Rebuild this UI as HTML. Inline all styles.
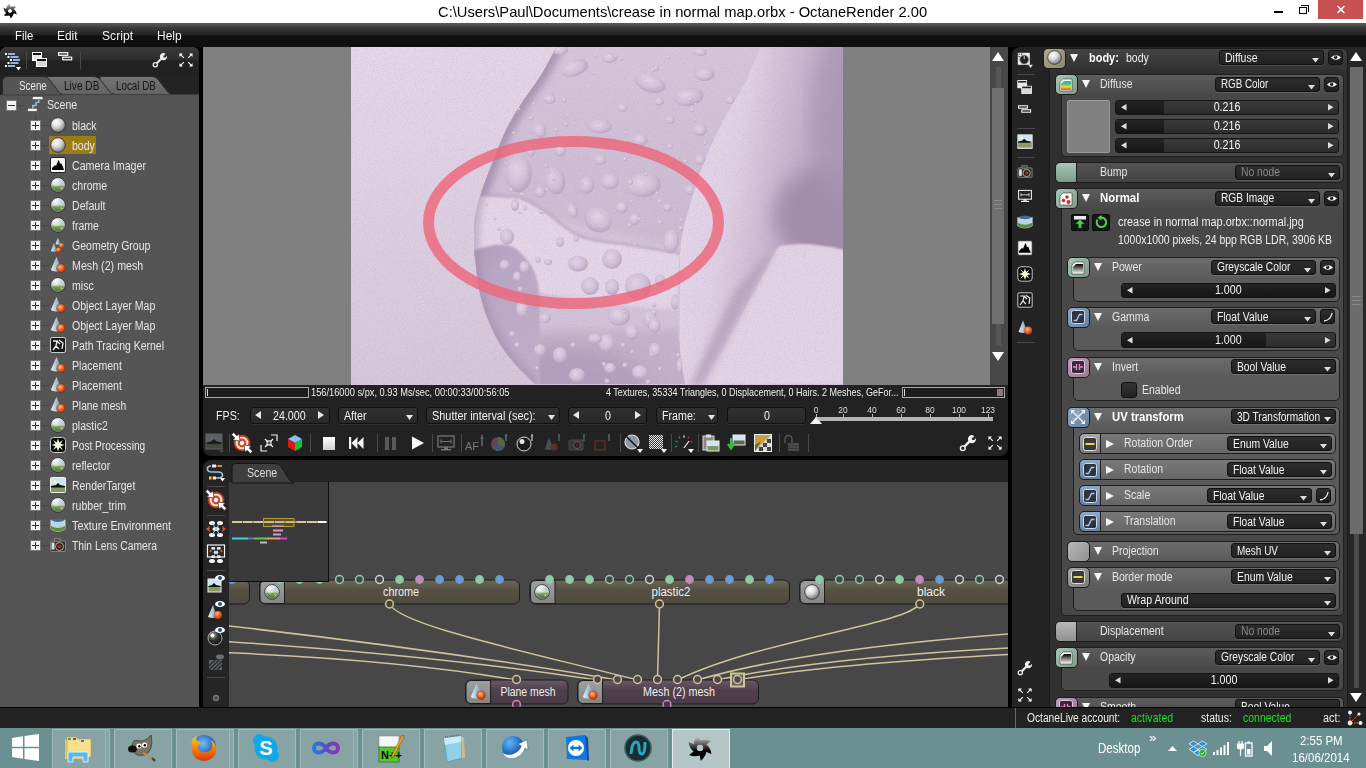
<!DOCTYPE html><html><head><meta charset="utf-8"><title>OctaneRender</title><style>
*{box-sizing:border-box;margin:0;padding:0}
html,body{width:1366px;height:768px;overflow:hidden;background:#000}
body{position:relative;font-family:"Liberation Sans",sans-serif;font-size:12px;color:#e6e6e6}
.a{position:absolute}
.t{position:absolute;white-space:nowrap;transform-origin:0 50%;transform:scaleX(.89);line-height:14px}
.tc{position:absolute;white-space:nowrap;text-align:center;transform:scaleX(.89);line-height:14px}
svg{position:absolute;overflow:visible}
</style></head><body>
<div class="a" style="left:0px;top:0px;width:1366px;height:23px;background:#fff"></div>
<svg style="left:0;top:0" width="24" height="22" viewBox="0 0 24 22"><defs><linearGradient id="olg1" gradientUnits="userSpaceOnUse" x1="0" y1="3.4000000000000004" x2="0" y2="18.6"><stop offset="0" stop-color="#c8c8c8"/><stop offset=".5" stop-color="#2a2a2a"/><stop offset=".62" stop-color="#000"/><stop offset="1" stop-color="#000"/></linearGradient></defs><path d="M5.99 10.65 Q5.93 6.48 9.60 3.41 Q10.14 7.05 10.36 8.43 Z M8.30 7.35 Q11.88 5.22 16.37 6.86 Q13.49 9.14 12.41 10.03 Z M12.31 7.70 Q15.95 9.74 16.77 14.45 Q13.35 13.09 12.05 12.60 Z M14.01 11.35 Q14.07 15.52 10.40 18.59 Q9.86 14.95 9.64 13.57 Z M11.70 14.65 Q8.12 16.78 3.63 15.14 Q6.51 12.86 7.59 11.97 Z M7.69 14.30 Q4.05 12.26 3.23 7.55 Q6.65 8.91 7.95 9.40 Z " fill="url(#olg1)"/><circle cx="10" cy="11" r="2.99" fill="none" stroke="url(#olg1)" stroke-width="1.95"/></svg>
<div class="t" style="left:438px;top:4px;font-size:15px;color:#000;transform:scaleX(.981);line-height:16px">C:\Users\Paul\Documents\crease in normal map.orbx - OctaneRender 2.00</div>
<div class="a" style="left:1274px;top:11px;width:9px;height:2px;background:#000"></div>
<div class="a" style="left:1299px;top:7px;width:8px;height:7px;border:1px solid #000;border-top-width:1px"></div>
<div class="a" style="left:1301px;top:5px;width:8px;height:7px;border:1px solid #000;border-left:none;border-bottom:none"></div>
<div class="a" style="left:1301px;top:5px;width:8px;height:1px;background:#000"></div>
<div class="a" style="left:1318px;top:0px;width:45px;height:19px;background:#c75050"></div>
<svg style="left:1337px;top:6px" width="8" height="7" viewBox="0 0 8 7"><path d="M.6 0 L7.400 7 M7.400 0 L.6 7" stroke="#fff" stroke-width="1.500"/></svg>
<div class="a" style="left:0px;top:22.5px;width:1366px;height:24.5px;background:linear-gradient(#5c5c5c 0%,#3a3a3a 20%,#202020 50%,#0f0f0f 54%,#0f0f0f 100%)"></div>
<div class="t" style="left:14.5px;top:28px;font-size:13.5px;transform:scaleX(0.8412);color:#f2f2f2;line-height:15px">File</div>
<div class="t" style="left:57.4px;top:28px;font-size:13.5px;transform:scaleX(0.8855);color:#f2f2f2;line-height:15px">Edit</div>
<div class="t" style="left:102px;top:28px;font-size:13.5px;transform:scaleX(0.8983);color:#f2f2f2;line-height:15px">Script</div>
<div class="t" style="left:157.2px;top:28px;font-size:13.5px;transform:scaleX(0.8860);color:#f2f2f2;line-height:15px">Help</div>
<div class="a" style="left:0px;top:707.5px;width:1366px;height:21px;background:#222"></div>
<div class="a" style="left:0px;top:47px;width:199px;height:660px;background:#555;border-radius:7px 7px 0 0"></div>
<div class="a" style="left:0px;top:47px;width:199px;height:28px;background:linear-gradient(#3a3a3a 0%,#2c2c2c 45%,#222 50%,#202020 100%);border-radius:7px 7px 0 0"></div>
<div class="a" style="left:0px;top:75px;width:199px;height:20px;background:#232323"></div>
<svg style="left:0;top:75px" width="200" height="20" viewBox="0 0 200 20"><defs><linearGradient id="tg" x1="0" y1="0" x2="0" y2="1"><stop offset="0" stop-color="#747474"/><stop offset="1" stop-color="#626262"/></linearGradient></defs><path d="M100 19.500 L100 1.500 L152 1.500 Q156 1.500 158.500 5 L167 16 Q169 19 172 19.500 Z" fill="url(#tg)" stroke="#2a2a2a" stroke-width="1"/><path d="M40 19.500 L40 1.500 L94 1.500 Q98 1.500 100.500 5 L109 16 Q111 19 115 19.500 Z" fill="url(#tg)" stroke="#2a2a2a" stroke-width="1"/><path d="M2.500 20 L2.500 7 Q2.500 1.500 8 1.500 L44 1.500 Q47.500 1.500 50 5 L58 16 Q60 19 63 19.500 L63 20 Z" fill="#555" stroke="#2a2a2a" stroke-width="1"/><rect x="1" y="19.500" width="198" height="1" fill="#555"/></svg>
<div class="t" style="left:19px;top:79px;font-size:12px;transform:scaleX(0.8170);color:#e4e4e4">Scene</div>
<div class="t" style="left:63.5px;top:79px;font-size:12px;transform:scaleX(0.8425);color:#161616">Live DB</div>
<div class="t" style="left:115.5px;top:79px;font-size:12px;transform:scaleX(0.8174);color:#161616">Local DB</div>
<svg width="0" height="0" style="left:0;top:0"><defs>
<radialGradient id="gb" cx="38%" cy="30%" r="75%"><stop offset="0" stop-color="#fff"/><stop offset=".45" stop-color="#d8dadc"/><stop offset="1" stop-color="#6c7074"/></radialGradient>
<linearGradient id="gg" x1="0" y1="0" x2="0" y2="1"><stop offset="0" stop-color="#dfeaf6"/><stop offset=".3" stop-color="#b9cddc"/><stop offset=".5" stop-color="#c8d4b8"/><stop offset=".6" stop-color="#7fa066"/><stop offset="1" stop-color="#3f6236"/></linearGradient>
<radialGradient id="go" cx="40%" cy="35%" r="70%"><stop offset="0" stop-color="#ffc090"/><stop offset=".5" stop-color="#f06020"/><stop offset="1" stop-color="#a03008"/></radialGradient>
<linearGradient id="gc" x1="0" y1="0" x2="1" y2="0"><stop offset="0" stop-color="#e8f4fc"/><stop offset=".5" stop-color="#a8c4d8"/><stop offset="1" stop-color="#5a7890"/></linearGradient>
<radialGradient id="hl" cx="35%" cy="25%" r="40%"><stop offset="0" stop-color="#fff" stop-opacity=".95"/><stop offset="1" stop-color="#fff" stop-opacity="0"/></radialGradient>
</defs></svg>
<div class="a" style="left:35px;top:115px;width:1px;height:430px;background:#474747"></div>
<div class="a" style="left:17px;top:105px;width:8px;height:1px;background:#474747"></div>
<div class="a" style="left:6px;top:100px;width:11px;height:11px;background:#f2f2f2;border:1px solid #777"></div><div class="a" style="left:8px;top:105px;width:7px;height:1px;background:#333"></div>
<svg style="left:27px;top:96px" width="17" height="17" viewBox="0 0 16 16"><rect x="5" y=".5" width="10" height="3" fill="#f4f4f4" stroke="#333" stroke-width=".5"/><rect x="0.5" y="11.5" width="9" height="3" fill="#f4f4f4" stroke="#333" stroke-width=".5"/><path d="M11 3.5 L11 6 L8.5 6 L8.5 9 L5.5 9 L5.5 11.5" fill="none" stroke="#8cc4d8" stroke-width="1.4"/></svg>
<div class="t" style="left:47px;top:98px;">Scene</div>
<div class="a" style="left:41px;top:125px;width:8px;height:1px;background:#474747"></div>
<div class="a" style="left:30px;top:120px;width:11px;height:11px;background:#f2f2f2;border:1px solid #777"></div><div class="a" style="left:32px;top:125px;width:7px;height:1px;background:#333"></div><div class="a" style="left:35px;top:122px;width:1px;height:7px;background:#333"></div>
<svg style="left:50px;top:117px" width="16" height="16" viewBox="0 0 16 16"><circle cx="8" cy="8" r="7.3" fill="url(#gb)" stroke="#2a2a2a" stroke-width=".8"/></svg>
<div class="t" style="left:72px;top:118.5px;transform:scaleX(.88)">black</div>
<div class="a" style="left:41px;top:145px;width:8px;height:1px;background:#474747"></div>
<div class="a" style="left:30px;top:140px;width:11px;height:11px;background:#f2f2f2;border:1px solid #777"></div><div class="a" style="left:32px;top:145px;width:7px;height:1px;background:#333"></div><div class="a" style="left:35px;top:142px;width:1px;height:7px;background:#333"></div>
<div class="a" style="left:49px;top:136px;width:47px;height:18px;background:#9c7c14"></div>
<svg style="left:50px;top:137px" width="16" height="16" viewBox="0 0 16 16"><circle cx="8" cy="8" r="7.3" fill="url(#gb)" stroke="#2a2a2a" stroke-width=".8"/></svg>
<div class="t" style="left:72px;top:138.5px;transform:scaleX(.88)">body</div>
<div class="a" style="left:41px;top:165px;width:8px;height:1px;background:#474747"></div>
<div class="a" style="left:30px;top:160px;width:11px;height:11px;background:#f2f2f2;border:1px solid #777"></div><div class="a" style="left:32px;top:165px;width:7px;height:1px;background:#333"></div><div class="a" style="left:35px;top:162px;width:1px;height:7px;background:#333"></div>
<svg style="left:50px;top:157px" width="16" height="16" viewBox="0 0 16 16"><rect x=".5" y=".5" width="15" height="15" rx="1.5" fill="#f4f4f4" stroke="#222" stroke-width="1"/><path d="M2 13 L2 11 L5 8 L6 9 L8 4 L9 3 L10 7 L11 6 L13 10 L14 13 Z" fill="#000"/></svg>
<div class="t" style="left:72px;top:158.5px;font-size:12px;transform:scaleX(0.8877);">Camera Imager</div>
<div class="a" style="left:41px;top:185px;width:8px;height:1px;background:#474747"></div>
<div class="a" style="left:30px;top:180px;width:11px;height:11px;background:#f2f2f2;border:1px solid #777"></div><div class="a" style="left:32px;top:185px;width:7px;height:1px;background:#333"></div><div class="a" style="left:35px;top:182px;width:1px;height:7px;background:#333"></div>
<svg style="left:50px;top:177px" width="16" height="16" viewBox="0 0 16 16"><circle cx="8" cy="8" r="7.3" fill="url(#gg)" stroke="#26302c" stroke-width=".9"/><circle cx="8" cy="8" r="6.500" fill="none" stroke="#e8f4f0" stroke-opacity=".45" stroke-width=".7"/><circle cx="8" cy="8" r="7" fill="url(#hl)"/><circle cx="11.300" cy="11.300" r="1" fill="#d8e060" opacity=".8"/></svg>
<div class="t" style="left:72px;top:178.5px;transform:scaleX(.88)">chrome</div>
<div class="a" style="left:41px;top:205px;width:8px;height:1px;background:#474747"></div>
<div class="a" style="left:30px;top:200px;width:11px;height:11px;background:#f2f2f2;border:1px solid #777"></div><div class="a" style="left:32px;top:205px;width:7px;height:1px;background:#333"></div><div class="a" style="left:35px;top:202px;width:1px;height:7px;background:#333"></div>
<svg style="left:50px;top:197px" width="16" height="16" viewBox="0 0 16 16"><circle cx="8" cy="8" r="7.3" fill="url(#gg)" stroke="#26302c" stroke-width=".9"/><circle cx="8" cy="8" r="6.500" fill="none" stroke="#e8f4f0" stroke-opacity=".45" stroke-width=".7"/><circle cx="8" cy="8" r="7" fill="url(#hl)"/><circle cx="11.300" cy="11.300" r="1" fill="#d8e060" opacity=".8"/></svg>
<div class="t" style="left:72px;top:198.5px;transform:scaleX(.88)">Default</div>
<div class="a" style="left:41px;top:225px;width:8px;height:1px;background:#474747"></div>
<div class="a" style="left:30px;top:220px;width:11px;height:11px;background:#f2f2f2;border:1px solid #777"></div><div class="a" style="left:32px;top:225px;width:7px;height:1px;background:#333"></div><div class="a" style="left:35px;top:222px;width:1px;height:7px;background:#333"></div>
<svg style="left:50px;top:217px" width="16" height="16" viewBox="0 0 16 16"><circle cx="8" cy="8" r="7.3" fill="url(#gg)" stroke="#26302c" stroke-width=".9"/><circle cx="8" cy="8" r="6.500" fill="none" stroke="#e8f4f0" stroke-opacity=".45" stroke-width=".7"/><circle cx="8" cy="8" r="7" fill="url(#hl)"/><circle cx="11.300" cy="11.300" r="1" fill="#d8e060" opacity=".8"/></svg>
<div class="t" style="left:72px;top:218.5px;transform:scaleX(.88)">frame</div>
<div class="a" style="left:41px;top:245px;width:8px;height:1px;background:#474747"></div>
<div class="a" style="left:30px;top:240px;width:11px;height:11px;background:#f2f2f2;border:1px solid #777"></div><div class="a" style="left:32px;top:245px;width:7px;height:1px;background:#333"></div><div class="a" style="left:35px;top:242px;width:1px;height:7px;background:#333"></div>
<svg style="left:50px;top:237px" width="16" height="16" viewBox="0 0 16 16"><path d="M8 0.5 L5.5 7 Q8 8.3 10.5 7 Z" fill="url(#gc)"/><path d="M4 6 L1 14 Q4 15.5 7 14 Z" fill="url(#gc)"/><circle cx="11.5" cy="8.5" r="2.6" fill="url(#go)"/><circle cx="8.5" cy="13" r="2.6" fill="url(#go)"/></svg>
<div class="t" style="left:72px;top:238.5px;font-size:12px;transform:scaleX(0.8773);">Geometry Group</div>
<div class="a" style="left:41px;top:265px;width:8px;height:1px;background:#474747"></div>
<div class="a" style="left:30px;top:260px;width:11px;height:11px;background:#f2f2f2;border:1px solid #777"></div><div class="a" style="left:32px;top:265px;width:7px;height:1px;background:#333"></div><div class="a" style="left:35px;top:262px;width:1px;height:7px;background:#333"></div>
<svg style="left:50px;top:257px" width="16" height="16" viewBox="0 0 16 16"><path d="M6.500 .5 L1 13 Q6 15.500 11 13 Z" fill="url(#gc)" stroke="#f0f6fa" stroke-opacity=".6" stroke-width=".6"/><circle cx="11" cy="11.3" r="4.3" fill="url(#go)" stroke="#702000" stroke-width=".4"/></svg>
<div class="t" style="left:72px;top:258.5px;font-size:12px;transform:scaleX(0.8910);">Mesh (2) mesh</div>
<div class="a" style="left:41px;top:285px;width:8px;height:1px;background:#474747"></div>
<div class="a" style="left:30px;top:280px;width:11px;height:11px;background:#f2f2f2;border:1px solid #777"></div><div class="a" style="left:32px;top:285px;width:7px;height:1px;background:#333"></div><div class="a" style="left:35px;top:282px;width:1px;height:7px;background:#333"></div>
<svg style="left:50px;top:277px" width="16" height="16" viewBox="0 0 16 16"><circle cx="8" cy="8" r="7.3" fill="url(#gg)" stroke="#26302c" stroke-width=".9"/><circle cx="8" cy="8" r="6.500" fill="none" stroke="#e8f4f0" stroke-opacity=".45" stroke-width=".7"/><circle cx="8" cy="8" r="7" fill="url(#hl)"/><circle cx="11.300" cy="11.300" r="1" fill="#d8e060" opacity=".8"/></svg>
<div class="t" style="left:72px;top:278.5px;transform:scaleX(.88)">misc</div>
<div class="a" style="left:41px;top:305px;width:8px;height:1px;background:#474747"></div>
<div class="a" style="left:30px;top:300px;width:11px;height:11px;background:#f2f2f2;border:1px solid #777"></div><div class="a" style="left:32px;top:305px;width:7px;height:1px;background:#333"></div><div class="a" style="left:35px;top:302px;width:1px;height:7px;background:#333"></div>
<svg style="left:50px;top:297px" width="16" height="16" viewBox="0 0 16 16"><path d="M6.500 .5 L1 13 Q6 15.500 11 13 Z" fill="url(#gc)" stroke="#f0f6fa" stroke-opacity=".6" stroke-width=".6"/><circle cx="11" cy="11.3" r="4.3" fill="url(#go)" stroke="#702000" stroke-width=".4"/></svg>
<div class="t" style="left:72px;top:298.5px;font-size:12px;transform:scaleX(0.8795);">Object Layer Map</div>
<div class="a" style="left:41px;top:325px;width:8px;height:1px;background:#474747"></div>
<div class="a" style="left:30px;top:320px;width:11px;height:11px;background:#f2f2f2;border:1px solid #777"></div><div class="a" style="left:32px;top:325px;width:7px;height:1px;background:#333"></div><div class="a" style="left:35px;top:322px;width:1px;height:7px;background:#333"></div>
<svg style="left:50px;top:317px" width="16" height="16" viewBox="0 0 16 16"><path d="M6.500 .5 L1 13 Q6 15.500 11 13 Z" fill="url(#gc)" stroke="#f0f6fa" stroke-opacity=".6" stroke-width=".6"/><circle cx="11" cy="11.3" r="4.3" fill="url(#go)" stroke="#702000" stroke-width=".4"/></svg>
<div class="t" style="left:72px;top:318.5px;font-size:12px;transform:scaleX(0.8795);">Object Layer Map</div>
<div class="a" style="left:41px;top:345px;width:8px;height:1px;background:#474747"></div>
<div class="a" style="left:30px;top:340px;width:11px;height:11px;background:#f2f2f2;border:1px solid #777"></div><div class="a" style="left:32px;top:345px;width:7px;height:1px;background:#333"></div><div class="a" style="left:35px;top:342px;width:1px;height:7px;background:#333"></div>
<svg style="left:50px;top:337px" width="16" height="16" viewBox="0 0 16 16"><rect x=".5" y=".5" width="15" height="15" rx="1.5" fill="#1a1a1a" stroke="#ccc" stroke-width="1"/><path d="M3 4 L7 4 L6 9 L3 13 M7 4 L10 7 M9 3 L13 6 L12 12 M6 9 L9 12" stroke="#eee" stroke-width="1.3" fill="none"/></svg>
<div class="t" style="left:72px;top:338.5px;font-size:12px;transform:scaleX(0.8729);">Path Tracing Kernel</div>
<div class="a" style="left:41px;top:365px;width:8px;height:1px;background:#474747"></div>
<div class="a" style="left:30px;top:360px;width:11px;height:11px;background:#f2f2f2;border:1px solid #777"></div><div class="a" style="left:32px;top:365px;width:7px;height:1px;background:#333"></div><div class="a" style="left:35px;top:362px;width:1px;height:7px;background:#333"></div>
<svg style="left:50px;top:357px" width="16" height="16" viewBox="0 0 16 16"><path d="M6.500 .5 L1 13 Q6 15.500 11 13 Z" fill="url(#gc)" stroke="#f0f6fa" stroke-opacity=".6" stroke-width=".6"/><circle cx="11" cy="11.3" r="4.3" fill="url(#go)" stroke="#702000" stroke-width=".4"/></svg>
<div class="t" style="left:72px;top:358.5px;transform:scaleX(.88)">Placement</div>
<div class="a" style="left:41px;top:385px;width:8px;height:1px;background:#474747"></div>
<div class="a" style="left:30px;top:380px;width:11px;height:11px;background:#f2f2f2;border:1px solid #777"></div><div class="a" style="left:32px;top:385px;width:7px;height:1px;background:#333"></div><div class="a" style="left:35px;top:382px;width:1px;height:7px;background:#333"></div>
<svg style="left:50px;top:377px" width="16" height="16" viewBox="0 0 16 16"><path d="M6.500 .5 L1 13 Q6 15.500 11 13 Z" fill="url(#gc)" stroke="#f0f6fa" stroke-opacity=".6" stroke-width=".6"/><circle cx="11" cy="11.3" r="4.3" fill="url(#go)" stroke="#702000" stroke-width=".4"/></svg>
<div class="t" style="left:72px;top:378.5px;transform:scaleX(.88)">Placement</div>
<div class="a" style="left:41px;top:405px;width:8px;height:1px;background:#474747"></div>
<div class="a" style="left:30px;top:400px;width:11px;height:11px;background:#f2f2f2;border:1px solid #777"></div><div class="a" style="left:32px;top:405px;width:7px;height:1px;background:#333"></div><div class="a" style="left:35px;top:402px;width:1px;height:7px;background:#333"></div>
<svg style="left:50px;top:397px" width="16" height="16" viewBox="0 0 16 16"><path d="M6.500 .5 L1 13 Q6 15.500 11 13 Z" fill="url(#gc)" stroke="#f0f6fa" stroke-opacity=".6" stroke-width=".6"/><circle cx="11" cy="11.3" r="4.3" fill="url(#go)" stroke="#702000" stroke-width=".4"/></svg>
<div class="t" style="left:72px;top:398.5px;font-size:12px;transform:scaleX(0.8553);">Plane mesh</div>
<div class="a" style="left:41px;top:425px;width:8px;height:1px;background:#474747"></div>
<div class="a" style="left:30px;top:420px;width:11px;height:11px;background:#f2f2f2;border:1px solid #777"></div><div class="a" style="left:32px;top:425px;width:7px;height:1px;background:#333"></div><div class="a" style="left:35px;top:422px;width:1px;height:7px;background:#333"></div>
<svg style="left:50px;top:417px" width="16" height="16" viewBox="0 0 16 16"><circle cx="8" cy="8" r="7.3" fill="url(#gg)" stroke="#26302c" stroke-width=".9"/><circle cx="8" cy="8" r="6.500" fill="none" stroke="#e8f4f0" stroke-opacity=".45" stroke-width=".7"/><circle cx="8" cy="8" r="7" fill="url(#hl)"/><circle cx="11.300" cy="11.300" r="1" fill="#d8e060" opacity=".8"/></svg>
<div class="t" style="left:72px;top:418.5px;transform:scaleX(.88)">plastic2</div>
<div class="a" style="left:41px;top:445px;width:8px;height:1px;background:#474747"></div>
<div class="a" style="left:30px;top:440px;width:11px;height:11px;background:#f2f2f2;border:1px solid #777"></div><div class="a" style="left:32px;top:445px;width:7px;height:1px;background:#333"></div><div class="a" style="left:35px;top:442px;width:1px;height:7px;background:#333"></div>
<svg style="left:50px;top:437px" width="16" height="16" viewBox="0 0 16 16"><rect x=".5" y=".5" width="15" height="15" rx="3" fill="#0a0a0a" stroke="#ccc" stroke-width="1"/><path d="M8 1.5 L9.3 5.5 L13 3 L10.5 6.7 L14.5 8 L10.5 9.3 L13 13 L9.3 10.5 L8 14.5 L6.7 10.5 L3 13 L5.5 9.3 L1.5 8 L5.5 6.7 L3 3 L6.7 5.5 Z" fill="#f4ffe0"/></svg>
<div class="t" style="left:72px;top:438.5px;font-size:12px;transform:scaleX(0.8442);">Post Processing</div>
<div class="a" style="left:41px;top:465px;width:8px;height:1px;background:#474747"></div>
<div class="a" style="left:30px;top:460px;width:11px;height:11px;background:#f2f2f2;border:1px solid #777"></div><div class="a" style="left:32px;top:465px;width:7px;height:1px;background:#333"></div><div class="a" style="left:35px;top:462px;width:1px;height:7px;background:#333"></div>
<svg style="left:50px;top:457px" width="16" height="16" viewBox="0 0 16 16"><circle cx="8" cy="8" r="7.3" fill="url(#gg)" stroke="#26302c" stroke-width=".9"/><circle cx="8" cy="8" r="6.500" fill="none" stroke="#e8f4f0" stroke-opacity=".45" stroke-width=".7"/><circle cx="8" cy="8" r="7" fill="url(#hl)"/><circle cx="11.300" cy="11.300" r="1" fill="#d8e060" opacity=".8"/></svg>
<div class="t" style="left:72px;top:458.5px;transform:scaleX(.88)">reflector</div>
<div class="a" style="left:41px;top:485px;width:8px;height:1px;background:#474747"></div>
<div class="a" style="left:30px;top:480px;width:11px;height:11px;background:#f2f2f2;border:1px solid #777"></div><div class="a" style="left:32px;top:485px;width:7px;height:1px;background:#333"></div><div class="a" style="left:35px;top:482px;width:1px;height:7px;background:#333"></div>
<svg style="left:50px;top:477px" width="16" height="16" viewBox="0 0 16 16"><rect x=".5" y=".5" width="15" height="15" rx="1" fill="#cfe4f4" stroke="#eee" stroke-width="1"/><rect x="1" y="9" width="14" height="6" fill="#7f9a5c"/><path d="M1 9 L6 8 L8 6 L10 8 L15 9 L15 10.5 L1 10.5 Z" fill="#111"/><circle cx="5" cy="4.5" r="1.6" fill="#fff8c0"/></svg>
<div class="t" style="left:72px;top:478.5px;font-size:12px;transform:scaleX(0.8706);">RenderTarget</div>
<div class="a" style="left:41px;top:505px;width:8px;height:1px;background:#474747"></div>
<div class="a" style="left:30px;top:500px;width:11px;height:11px;background:#f2f2f2;border:1px solid #777"></div><div class="a" style="left:32px;top:505px;width:7px;height:1px;background:#333"></div><div class="a" style="left:35px;top:502px;width:1px;height:7px;background:#333"></div>
<svg style="left:50px;top:497px" width="16" height="16" viewBox="0 0 16 16"><circle cx="8" cy="8" r="7.3" fill="url(#gg)" stroke="#26302c" stroke-width=".9"/><circle cx="8" cy="8" r="6.500" fill="none" stroke="#e8f4f0" stroke-opacity=".45" stroke-width=".7"/><circle cx="8" cy="8" r="7" fill="url(#hl)"/><circle cx="11.300" cy="11.300" r="1" fill="#d8e060" opacity=".8"/></svg>
<div class="t" style="left:72px;top:498.5px;transform:scaleX(.88)">rubber_trim</div>
<div class="a" style="left:41px;top:525px;width:8px;height:1px;background:#474747"></div>
<div class="a" style="left:30px;top:520px;width:11px;height:11px;background:#f2f2f2;border:1px solid #777"></div><div class="a" style="left:32px;top:525px;width:7px;height:1px;background:#333"></div><div class="a" style="left:35px;top:522px;width:1px;height:7px;background:#333"></div>
<svg style="left:50px;top:517px" width="16" height="16" viewBox="0 0 16 16"><path d="M1 3 Q8 7 15 3 L15 12 Q8 16.5 1 12 Z" fill="#b8d4ea" stroke="#e8f0f8" stroke-width=".8"/><path d="M1 9 Q8 13 15 9 L15 12 Q8 16.5 1 12 Z" fill="#5f8a3a"/><path d="M1 3 Q8 0 15 3 Q8 7 1 3 Z" fill="#3f6a94"/></svg>
<div class="t" style="left:72px;top:518.5px;font-size:12px;transform:scaleX(0.8996);">Texture Environment</div>
<div class="a" style="left:41px;top:545px;width:8px;height:1px;background:#474747"></div>
<div class="a" style="left:30px;top:540px;width:11px;height:11px;background:#f2f2f2;border:1px solid #777"></div><div class="a" style="left:32px;top:545px;width:7px;height:1px;background:#333"></div><div class="a" style="left:35px;top:542px;width:1px;height:7px;background:#333"></div>
<svg style="left:50px;top:537px" width="16" height="16" viewBox="0 0 16 16"><rect x=".5" y="4" width="15" height="10.5" rx="1.5" fill="#333" stroke="#999" stroke-width=".7"/><rect x="4.5" y="1.5" width="6" height="3" fill="#555" stroke="#999" stroke-width=".5"/><circle cx="9.5" cy="9.5" r="4" fill="#222" stroke="#bbb" stroke-width=".9"/><circle cx="9.5" cy="9.5" r="2" fill="#c02020"/><rect x="1.5" y="5.5" width="3" height="7" fill="#ddd"/></svg>
<div class="t" style="left:72px;top:538.5px;font-size:12px;transform:scaleX(0.8611);">Thin Lens Camera</div>
<svg style="left:4px;top:51px" width="20" height="20" viewBox="0 0 20 20"><g fill="#fff"><rect x="1" y="2" width="2" height="2"/><rect x="3.5" y="5" width="2" height="2"/><rect x="6" y="8" width="2" height="2"/><rect x="3.5" y="11" width="2" height="2"/><rect x="1" y="14" width="2" height="2"/></g><g fill="#9ab0d8"><rect x="4" y="2" width="7" height="2"/><rect x="6.5" y="5" width="8" height="2"/><rect x="9" y="8" width="7" height="2"/><rect x="6.5" y="11" width="8" height="2"/><rect x="4" y="14" width="7" height="2"/></g><path d="M12 16 L17 16 L14.5 19.5 Z" fill="#fff"/></svg>
<div class="a" style="left:26px;top:52px;width:1px;height:17px;background:#4a4a4a"></div>
<div class="a" style="left:80px;top:52px;width:1px;height:17px;background:#4a4a4a"></div>
<svg style="left:32px;top:52px" width="16" height="16" viewBox="0 0 16 16"><rect x=".5" y=".5" width="9" height="8" fill="#e8e8e8" stroke="#fff" stroke-width="1"/><rect x="1" y="1" width="8" height="2" fill="#111"/><rect x="4.5" y="6.5" width="10" height="8" fill="#d8d8d8" stroke="#fff" stroke-width="1"/><rect x="5" y="7" width="9" height="2" fill="#111"/></svg>
<svg style="left:58px;top:52px" width="16" height="10" viewBox="0 0 16 10"><rect x=".7" y=".7" width="9" height="2.6" fill="none" stroke="#fff" stroke-width="1.2"/><rect x="4.7" y="5.2" width="9" height="2.6" fill="none" stroke="#fff" stroke-width="1.2"/></svg>
<svg style="left:152px;top:52px" width="16" height="16" viewBox="0 0 16 16"><circle cx="3.3" cy="12.7" r="2.1" fill="none" stroke="#f0f0f0" stroke-width="1.3"/><path d="M4.8 11.2 L9.6 6.4" stroke="#f0f0f0" stroke-width="2"/><path d="M13.6 1.8 L11.2 4.2 L11.8 5.4 L13.4 5.4 L15 3.8 A3.6 3.6 0 1 1 11.6 1 Z" fill="#f0f0f0"/></svg>
<svg style="left:179px;top:53px" width="14" height="14" viewBox="0 0 16 16"><g stroke="#f4f4f4" stroke-width="1.4" fill="#f4f4f4"><path d="M1 1 L5.5 5.5 M15 1 L10.5 5.5 M1 15 L5.5 10.5 M15 15 L10.5 10.5"/><path d="M.5 .5 L4.5 .5 L.5 4.5 Z M15.500 .5 L11.5 .5 L15.5 4.5 Z M.5 15.5 L4.5 15.5 L.5 11.5 Z M15.5 15.5 L11.5 15.5 L15.5 11.5 Z" stroke="none"/></g></svg>
<div class="a" style="left:203px;top:47px;width:787px;height:338px;background:#808080"></div>
<div class="a" style="left:990px;top:47px;width:18px;height:338px;background:#484848"></div>
<svg style="left:992px;top:52px" width="12" height="9" viewBox="0 0 12 9"><path d="M0 9 L6 0 L12 9 Z" fill="#fff"/></svg>
<svg style="left:992px;top:352px" width="12" height="9" viewBox="0 0 12 9"><path d="M0 0 L6 9 L12 0 Z" fill="#fff"/></svg>
<div class="a" style="left:996px;top:67px;width:5px;height:21px;background:#565656"></div>
<div class="a" style="left:992px;top:88px;width:12px;height:236px;background:#707070"></div>
<div class="a" style="left:996px;top:324px;width:5px;height:22px;background:#565656"></div>
<div class="a" style="left:994px;top:200px;width:8px;height:1px;background:#8a8a8a"></div>
<div class="a" style="left:994px;top:204px;width:8px;height:1px;background:#8a8a8a"></div>
<div class="a" style="left:994px;top:208px;width:8px;height:1px;background:#8a8a8a"></div>
<svg style="left:351px;top:47px;overflow:hidden" width="492" height="338" viewBox="0 0 492 338"><defs>
<linearGradient id="vbg" x1="0" y1="0" x2="0.3" y2="1"><stop offset="0" stop-color="#e6d9ea"/><stop offset="1" stop-color="#d6c7db"/></linearGradient>
<linearGradient id="vband" x1="0" y1="0" x2="0" y2="1"><stop offset="0" stop-color="#d6c6dc"/><stop offset=".5" stop-color="#cdbdd4"/><stop offset="1" stop-color="#c3b1ca"/></linearGradient>
<linearGradient id="vside" gradientUnits="userSpaceOnUse" x1="330" y1="0" x2="492" y2="30"><stop offset="0" stop-color="#eadcee"/><stop offset=".45" stop-color="#e0d1e5"/><stop offset=".72" stop-color="#cbb8d2"/><stop offset="1" stop-color="#b6a1bf"/></linearGradient>
<linearGradient id="vbandedge" x1="0" y1="0" x2="1" y2="0"><stop offset="0" stop-color="#a890b4" stop-opacity=".55"/><stop offset="1" stop-color="#a890b4" stop-opacity="0"/></linearGradient>
<radialGradient id="drop" cx="42%" cy="38%" r="65%"><stop offset="0" stop-color="#e4d6ea"/><stop offset=".6" stop-color="#d2c1d9"/><stop offset="1" stop-color="#b8a5c2"/></radialGradient>
<filter id="b1"><feGaussianBlur stdDeviation="1"/></filter>
<filter id="b3"><feGaussianBlur stdDeviation="3.5"/></filter>
<filter id="b8"><feGaussianBlur stdDeviation="9"/></filter>
<clipPath id="bandclip"><path d="M206.0 -1.0 C203.3 3.8 196.0 18.3 190.0 28.0 C184.0 37.7 175.8 47.8 170.0 57.0 C164.2 66.2 159.7 73.5 155.0 83.0 C150.3 92.5 146.0 104.0 142.0 114.0 C138.0 124.0 134.0 133.8 131.0 143.0 C128.0 152.2 125.3 160.7 124.0 169.0 C122.7 177.3 123.0 186.0 123.0 193.0 C123.0 200.0 122.8 201.3 124.0 211.0 C125.2 220.7 127.0 238.8 130.0 251.0 C133.0 263.2 137.2 274.0 142.0 284.0 C146.8 294.0 152.0 302.2 159.0 311.0 C166.0 319.8 179.8 332.7 184.0 337.0 L334.0 337.0 C333.3 332.7 331.2 320.8 330.0 311.0 C328.8 301.2 327.5 291.0 327.0 278.0 C326.5 265.0 326.3 247.8 327.0 233.0 C327.7 218.2 329.5 199.7 331.0 189.0 C332.5 178.3 333.8 177.0 336.0 169.0 C338.2 161.0 340.2 152.3 344.0 141.0 C347.8 129.7 353.5 113.7 359.0 101.0 C364.5 88.3 371.0 76.2 377.0 65.0 C383.0 53.8 389.5 45.0 395.0 34.0 C400.5 23.0 407.5 4.8 410.0 -1.0 Z"/></clipPath>
</defs><rect width="492" height="338" fill="url(#vbg)"/><rect x="329" y="0" width="170" height="338" fill="url(#vside)"/><ellipse cx="484" cy="168" rx="62" ry="50" fill="#a08ba9" filter="url(#b8)" opacity=".9"/><ellipse cx="499" cy="73" rx="40" ry="90" fill="#aa96b3" filter="url(#b8)" opacity=".7"/><path d="M427.0 200.0 Q449.0 193.0 494.0 203.0 L494.0 338.0 L352.0 338.0 Z" fill="#e2d4e6" filter="url(#b1)"/><path d="M425.0 199.0 L352.0 338.0 L339.0 338.0 L384.0 243.0 Z" fill="#b8a4c0" filter="url(#b3)" opacity=".85"/><path d="M206.0 -1.0 C203.3 3.8 196.0 18.3 190.0 28.0 C184.0 37.7 175.8 47.8 170.0 57.0 C164.2 66.2 159.7 73.5 155.0 83.0 C150.3 92.5 146.0 104.0 142.0 114.0 C138.0 124.0 134.0 133.8 131.0 143.0 C128.0 152.2 125.3 160.7 124.0 169.0 C122.7 177.3 123.0 186.0 123.0 193.0 C123.0 200.0 122.8 201.3 124.0 211.0 C125.2 220.7 127.0 238.8 130.0 251.0 C133.0 263.2 137.2 274.0 142.0 284.0 C146.8 294.0 152.0 302.2 159.0 311.0 C166.0 319.8 179.8 332.7 184.0 337.0 L334.0 337.0 C333.3 332.7 331.2 320.8 330.0 311.0 C328.8 301.2 327.5 291.0 327.0 278.0 C326.5 265.0 326.3 247.8 327.0 233.0 C327.7 218.2 329.5 199.7 331.0 189.0 C332.5 178.3 333.8 177.0 336.0 169.0 C338.2 161.0 340.2 152.3 344.0 141.0 C347.8 129.7 353.5 113.7 359.0 101.0 C364.5 88.3 371.0 76.2 377.0 65.0 C383.0 53.8 389.5 45.0 395.0 34.0 C400.5 23.0 407.5 4.8 410.0 -1.0 Z" fill="url(#vband)"/><g clip-path="url(#bandclip)"><path d="M206.0 -1.0 C203.3 3.8 196.0 18.3 190.0 28.0 C184.0 37.7 175.8 47.8 170.0 57.0 C164.2 66.2 159.7 73.5 155.0 83.0 C150.3 92.5 146.0 104.0 142.0 114.0 C138.0 124.0 134.0 133.8 131.0 143.0 C128.0 152.2 125.3 160.7 124.0 169.0 C122.7 177.3 123.0 186.0 123.0 193.0 C123.0 200.0 122.8 201.3 124.0 211.0 C125.2 220.7 127.0 238.8 130.0 251.0 C133.0 263.2 137.2 274.0 142.0 284.0 C146.8 294.0 152.0 302.2 159.0 311.0 C166.0 319.8 179.8 332.7 184.0 337.0" fill="none" stroke="#9d88a8" stroke-width="14" filter="url(#b3)" opacity=".55"/><ellipse cx="209" cy="343" rx="90" ry="45" fill="#b09cb9" filter="url(#b8)" opacity=".8"/><path d="M119.0 153.0 L349.0 203.0 L349.0 283.0 L119.0 283.0 Z" fill="#d6c7dc" filter="url(#b3)" opacity=".8"/><path d="M119.0 149.0 L168.0 150.0 Q187.0 158.0 203.0 171.0 Q217.0 184.0 231.0 190.0 Q249.0 195.0 273.0 197.0 L339.0 208.0 L339.0 265.0 Q269.0 261.0 209.0 251.0 L187.0 245.0 L186.0 234.0 Q182.0 215.0 164.0 201.0 Q149.0 193.0 119.0 205.0 Z" fill="#e5d7e9" filter="url(#b1)"/><path d="M187.0 249.0 Q249.0 265.0 339.0 269.0" fill="none" stroke="#d3c3d9" stroke-width="10" filter="url(#b3)"/><path d="M136.0 148.0 L168.0 150.0 Q187.0 158.0 203.0 171.0 Q217.0 184.0 231.0 190.0 Q249.0 195.0 273.0 197.0 L339.0 208.0" fill="none" stroke="#baa6c3" stroke-width="2.5" filter="url(#b1)" opacity=".8"/><defs><linearGradient id="crg" x1="0" y1="0" x2="0.6" y2="1"><stop offset="0" stop-color="#b09bbb"/><stop offset=".35" stop-color="#bba8c5"/><stop offset="1" stop-color="#c0aeca"/></linearGradient></defs><path d="M115.0 208.0 Q149.0 191.0 165.0 202.0 Q183.0 217.0 187.0 237.0 L188.5 253.0 L189.0 339.0 L139.0 339.0 L115.0 253.0 Z" fill="url(#crg)" filter="url(#b1)"/><path d="M206.0 -1.0 C203.3 3.8 196.0 18.3 190.0 28.0 C184.0 37.7 175.8 47.8 170.0 57.0 C164.2 66.2 159.7 73.5 155.0 83.0 C150.3 92.5 146.0 104.0 142.0 114.0 C138.0 124.0 134.0 133.8 131.0 143.0 C128.0 152.2 125.3 160.7 124.0 169.0 C122.7 177.3 123.0 186.0 123.0 193.0 C123.0 200.0 122.8 201.3 124.0 211.0 C125.2 220.7 127.0 238.8 130.0 251.0 C133.0 263.2 137.2 274.0 142.0 284.0 C146.8 294.0 152.0 302.2 159.0 311.0 C166.0 319.8 179.8 332.7 184.0 337.0" fill="none" stroke="#9d88a8" stroke-width="10" filter="url(#b3)" opacity=".5"/><ellipse cx="167.6" cy="126.4" rx="13" ry="19" transform="rotate(0 167.6 126.4)" fill="url(#drop)"/><ellipse cx="204.0" cy="133.5" rx="10" ry="14" transform="rotate(-10 204.0 133.5)" fill="url(#drop)"/><ellipse cx="235.5" cy="138.0" rx="8" ry="9" transform="rotate(0 235.5 138.0)" fill="url(#drop)"/><ellipse cx="259.0" cy="134.6" rx="9" ry="8" transform="rotate(0 259.0 134.6)" fill="url(#drop)"/><ellipse cx="293.0" cy="138.0" rx="17" ry="12" transform="rotate(-8 293.0 138.0)" fill="url(#drop)"/><ellipse cx="247.0" cy="173.0" rx="14" ry="12" transform="rotate(30 247.0 173.0)" fill="url(#drop)"/><ellipse cx="221.5" cy="163.0" rx="5" ry="8" transform="rotate(-20 221.5 163.0)" fill="url(#drop)"/><ellipse cx="270.7" cy="160.4" rx="6" ry="6" transform="rotate(0 270.7 160.4)" fill="url(#drop)"/><ellipse cx="283.6" cy="172.0" rx="5" ry="6" transform="rotate(0 283.6 172.0)" fill="url(#drop)"/><ellipse cx="316.4" cy="160.4" rx="4" ry="4" transform="rotate(0 316.4 160.4)" fill="url(#drop)"/><ellipse cx="320.0" cy="194.4" rx="8" ry="12" transform="rotate(5 320.0 194.4)" fill="url(#drop)"/><ellipse cx="227.0" cy="216.7" rx="10" ry="8" transform="rotate(0 227.0 216.7)" fill="url(#drop)"/><ellipse cx="261.0" cy="212.0" rx="10" ry="10" transform="rotate(0 261.0 212.0)" fill="url(#drop)"/><ellipse cx="239.0" cy="239.0" rx="9" ry="9" transform="rotate(0 239.0 239.0)" fill="url(#drop)"/><ellipse cx="261.0" cy="240.0" rx="7" ry="8" transform="rotate(0 261.0 240.0)" fill="url(#drop)"/><ellipse cx="287.0" cy="239.0" rx="13" ry="13" transform="rotate(0 287.0 239.0)" fill="url(#drop)"/><ellipse cx="268.0" cy="269.0" rx="11" ry="10" transform="rotate(0 268.0 269.0)" fill="url(#drop)"/><ellipse cx="299.0" cy="272.0" rx="7" ry="9" transform="rotate(0 299.0 272.0)" fill="url(#drop)"/><ellipse cx="156.0" cy="189.7" rx="7" ry="8" transform="rotate(0 156.0 189.7)" fill="url(#drop)"/><ellipse cx="173.5" cy="220.0" rx="5" ry="6" transform="rotate(0 173.5 220.0)" fill="url(#drop)"/><ellipse cx="153.5" cy="218.0" rx="5" ry="5" transform="rotate(0 153.5 218.0)" fill="url(#drop)"/><ellipse cx="166.0" cy="229.5" rx="4" ry="5" transform="rotate(0 166.0 229.5)" fill="url(#drop)"/><ellipse cx="223.7" cy="21.0" rx="14" ry="8" transform="rotate(-20 223.7 21.0)" fill="url(#drop)"/><ellipse cx="258.0" cy="11.0" rx="8" ry="5" transform="rotate(0 258.0 11.0)" fill="url(#drop)"/><ellipse cx="299.0" cy="36.0" rx="16" ry="9" transform="rotate(20 299.0 36.0)" fill="url(#drop)"/><ellipse cx="337.7" cy="50.0" rx="15" ry="9" transform="rotate(-8 337.7 50.0)" fill="url(#drop)"/><ellipse cx="353.6" cy="27.0" rx="10" ry="7" transform="rotate(0 353.6 27.0)" fill="url(#drop)"/><ellipse cx="249.0" cy="79.6" rx="12" ry="7" transform="rotate(0 249.0 79.6)" fill="url(#drop)"/><ellipse cx="198.7" cy="52.0" rx="6" ry="5" transform="rotate(0 198.7 52.0)" fill="url(#drop)"/><ellipse cx="308.0" cy="54.5" rx="5" ry="4" transform="rotate(0 308.0 54.5)" fill="url(#drop)"/><ellipse cx="271.6" cy="61.0" rx="5" ry="4" transform="rotate(0 271.6 61.0)" fill="url(#drop)"/><ellipse cx="255.6" cy="296.0" rx="8" ry="9" transform="rotate(0 255.6 296.0)" fill="url(#drop)"/><ellipse cx="280.7" cy="284.7" rx="7" ry="8" transform="rotate(0 280.7 284.7)" fill="url(#drop)"/><ellipse cx="303.5" cy="278.0" rx="6" ry="8" transform="rotate(0 303.5 278.0)" fill="url(#drop)"/><ellipse cx="226.0" cy="328.0" rx="8" ry="7" transform="rotate(0 226.0 328.0)" fill="url(#drop)"/><ellipse cx="171.0" cy="262.0" rx="6" ry="8" transform="rotate(0 171.0 262.0)" fill="url(#drop)"/><ellipse cx="194.0" cy="271.0" rx="6" ry="5" transform="rotate(0 194.0 271.0)" fill="url(#drop)"/><ellipse cx="244.0" cy="291.5" rx="7" ry="5" transform="rotate(0 244.0 291.5)" fill="url(#drop)"/><ellipse cx="324.0" cy="255.0" rx="4" ry="8" transform="rotate(0 324.0 255.0)" fill="url(#drop)"/><ellipse cx="328.6" cy="319.0" rx="3" ry="8" transform="rotate(0 328.6 319.0)" fill="url(#drop)"/><ellipse cx="289.0" cy="93.0" rx="8" ry="6" transform="rotate(0 289.0 93.0)" fill="url(#drop)"/><ellipse cx="349.0" cy="83.0" rx="7" ry="6" transform="rotate(0 349.0 83.0)" fill="url(#drop)"/><ellipse cx="189.0" cy="83.0" rx="6" ry="8" transform="rotate(-20 189.0 83.0)" fill="url(#drop)"/><ellipse cx="209.0" cy="103.0" rx="6" ry="7" transform="rotate(0 209.0 103.0)" fill="url(#drop)"/><ellipse cx="179.0" cy="103.0" rx="5" ry="7" transform="rotate(-20 179.0 103.0)" fill="url(#drop)"/><ellipse cx="164.0" cy="158.0" rx="4" ry="6" transform="rotate(0 164.0 158.0)" fill="url(#drop)"/><ellipse cx="349.0" cy="113.0" rx="5" ry="5" transform="rotate(0 349.0 113.0)" fill="url(#drop)"/><ellipse cx="379.0" cy="53.0" rx="5" ry="4" transform="rotate(0 379.0 53.0)" fill="url(#drop)"/><ellipse cx="319.0" cy="73.0" rx="5" ry="4" transform="rotate(0 319.0 73.0)" fill="url(#drop)"/><ellipse cx="209.0" cy="3.0" rx="8" ry="5" transform="rotate(0 209.0 3.0)" fill="url(#drop)"/><ellipse cx="349.0" cy="5.0" rx="7" ry="4" transform="rotate(0 349.0 5.0)" fill="url(#drop)"/><ellipse cx="209.0" cy="308.0" rx="7" ry="8" transform="rotate(0 209.0 308.0)" fill="url(#drop)"/><ellipse cx="289.0" cy="325.0" rx="8" ry="7" transform="rotate(0 289.0 325.0)" fill="url(#drop)"/><ellipse cx="259.0" cy="321.0" rx="6" ry="5" transform="rotate(0 259.0 321.0)" fill="url(#drop)"/><ellipse cx="189.0" cy="303.0" rx="6" ry="6" transform="rotate(0 189.0 303.0)" fill="url(#drop)"/><ellipse cx="304.0" cy="303.0" rx="6" ry="7" transform="rotate(0 304.0 303.0)" fill="url(#drop)"/><ellipse cx="189.0" cy="145.0" rx="5" ry="6" transform="rotate(0 189.0 145.0)" fill="url(#drop)"/><ellipse cx="249.0" cy="113.0" rx="6" ry="5" transform="rotate(0 249.0 113.0)" fill="url(#drop)"/><ellipse cx="319.0" cy="113.0" rx="6" ry="5" transform="rotate(0 319.0 113.0)" fill="url(#drop)"/><ellipse cx="339.0" cy="143.0" rx="5" ry="5" transform="rotate(0 339.0 143.0)" fill="url(#drop)"/><ellipse cx="309.0" cy="233.0" rx="5" ry="6" transform="rotate(0 309.0 233.0)" fill="url(#drop)"/><ellipse cx="209.0" cy="195.0" rx="4" ry="5" transform="rotate(0 209.0 195.0)" fill="url(#drop)"/><ellipse cx="197.0" cy="215.0" rx="4" ry="3" transform="rotate(0 197.0 215.0)" fill="url(#drop)"/><circle cx="213" cy="53" r="2.3" fill="url(#drop)"/><circle cx="148" cy="182" r="1.8" fill="url(#drop)"/><circle cx="144" cy="172" r="1.4" fill="url(#drop)"/><circle cx="242" cy="26" r="1.4" fill="url(#drop)"/><circle cx="239" cy="279" r="1.5" fill="url(#drop)"/><circle cx="187" cy="213" r="2.7" fill="url(#drop)"/><circle cx="279" cy="135" r="2.8" fill="url(#drop)"/><circle cx="141" cy="290" r="1.7" fill="url(#drop)"/><circle cx="167" cy="42" r="1.8" fill="url(#drop)"/><circle cx="341" cy="63" r="2.2" fill="url(#drop)"/><circle cx="295" cy="127" r="2.1" fill="url(#drop)"/><circle cx="145" cy="23" r="1.6" fill="url(#drop)"/><circle cx="306" cy="146" r="1.8" fill="url(#drop)"/><circle cx="281" cy="154" r="1.7" fill="url(#drop)"/><circle cx="336" cy="236" r="1.7" fill="url(#drop)"/><circle cx="278" cy="178" r="2.6" fill="url(#drop)"/><circle cx="319" cy="99" r="2.8" fill="url(#drop)"/><circle cx="160" cy="143" r="2.4" fill="url(#drop)"/><circle cx="169" cy="166" r="1.4" fill="url(#drop)"/><circle cx="303" cy="258" r="2.2" fill="url(#drop)"/><circle cx="357" cy="108" r="2.3" fill="url(#drop)"/><circle cx="284" cy="197" r="2.0" fill="url(#drop)"/><circle cx="347" cy="319" r="2.0" fill="url(#drop)"/><circle cx="302" cy="23" r="2.4" fill="url(#drop)"/><circle cx="297" cy="335" r="2.5" fill="url(#drop)"/><circle cx="203" cy="132" r="2.3" fill="url(#drop)"/><circle cx="135" cy="157" r="1.6" fill="url(#drop)"/><circle cx="159" cy="23" r="2.5" fill="url(#drop)"/><circle cx="163" cy="86" r="1.9" fill="url(#drop)"/><circle cx="356" cy="30" r="2.0" fill="url(#drop)"/><circle cx="272" cy="298" r="2.5" fill="url(#drop)"/><circle cx="354" cy="96" r="1.9" fill="url(#drop)"/><circle cx="222" cy="298" r="2.7" fill="url(#drop)"/><circle cx="168" cy="62" r="1.6" fill="url(#drop)"/><circle cx="190" cy="165" r="2.2" fill="url(#drop)"/><circle cx="197" cy="4" r="1.9" fill="url(#drop)"/><circle cx="225" cy="192" r="2.7" fill="url(#drop)"/><circle cx="309" cy="175" r="2.2" fill="url(#drop)"/><circle cx="305" cy="21" r="2.6" fill="url(#drop)"/><circle cx="332" cy="295" r="2.5" fill="url(#drop)"/><circle cx="231" cy="136" r="1.5" fill="url(#drop)"/><circle cx="294" cy="24" r="1.4" fill="url(#drop)"/><circle cx="183" cy="57" r="1.8" fill="url(#drop)"/><circle cx="143" cy="3" r="1.5" fill="url(#drop)"/><circle cx="155" cy="124" r="1.3" fill="url(#drop)"/><circle cx="356" cy="208" r="1.5" fill="url(#drop)"/><circle cx="195" cy="119" r="1.8" fill="url(#drop)"/><circle cx="161" cy="287" r="2.8" fill="url(#drop)"/><circle cx="250" cy="165" r="1.4" fill="url(#drop)"/><circle cx="156" cy="117" r="1.7" fill="url(#drop)"/><circle cx="345" cy="57" r="1.3" fill="url(#drop)"/><circle cx="376" cy="179" r="1.5" fill="url(#drop)"/><circle cx="270" cy="12" r="2.1" fill="url(#drop)"/><circle cx="383" cy="291" r="2.3" fill="url(#drop)"/><circle cx="197" cy="125" r="1.6" fill="url(#drop)"/><circle cx="330" cy="181" r="2.5" fill="url(#drop)"/><circle cx="215" cy="77" r="2.5" fill="url(#drop)"/><circle cx="385" cy="288" r="2.5" fill="url(#drop)"/><circle cx="342" cy="250" r="1.6" fill="url(#drop)"/><circle cx="264" cy="122" r="1.3" fill="url(#drop)"/><circle cx="136" cy="96" r="1.7" fill="url(#drop)"/><circle cx="309" cy="322" r="2.0" fill="url(#drop)"/><circle cx="373" cy="333" r="2.7" fill="url(#drop)"/><circle cx="224" cy="77" r="1.6" fill="url(#drop)"/><circle cx="180" cy="71" r="2.2" fill="url(#drop)"/><circle cx="363" cy="284" r="2.0" fill="url(#drop)"/><circle cx="299" cy="270" r="1.4" fill="url(#drop)"/><circle cx="301" cy="307" r="2.5" fill="url(#drop)"/><circle cx="324" cy="163" r="1.6" fill="url(#drop)"/><circle cx="334" cy="114" r="2.5" fill="url(#drop)"/><circle cx="382" cy="135" r="1.9" fill="url(#drop)"/><circle cx="375" cy="245" r="1.6" fill="url(#drop)"/><circle cx="162" cy="53" r="2.7" fill="url(#drop)"/><circle cx="339" cy="52" r="2.5" fill="url(#drop)"/><circle cx="384" cy="223" r="1.8" fill="url(#drop)"/><circle cx="272" cy="47" r="1.3" fill="url(#drop)"/><circle cx="381" cy="220" r="2.1" fill="url(#drop)"/><circle cx="372" cy="148" r="2.6" fill="url(#drop)"/><circle cx="344" cy="73" r="1.7" fill="url(#drop)"/><circle cx="205" cy="83" r="2.2" fill="url(#drop)"/><circle cx="196" cy="143" r="1.5" fill="url(#drop)"/><circle cx="366" cy="121" r="2.0" fill="url(#drop)"/><circle cx="281" cy="305" r="1.9" fill="url(#drop)"/><circle cx="368" cy="171" r="2.1" fill="url(#drop)"/><circle cx="265" cy="9" r="2.0" fill="url(#drop)"/><circle cx="177" cy="4" r="2.5" fill="url(#drop)"/><circle cx="174" cy="161" r="2.4" fill="url(#drop)"/><circle cx="274" cy="112" r="2.1" fill="url(#drop)"/><circle cx="273" cy="265" r="1.5" fill="url(#drop)"/><circle cx="275" cy="86" r="1.7" fill="url(#drop)"/><circle cx="330" cy="173" r="2.1" fill="url(#drop)"/><circle cx="327" cy="308" r="2.0" fill="url(#drop)"/><circle cx="288" cy="172" r="2.1" fill="url(#drop)"/><circle cx="309" cy="154" r="2.1" fill="url(#drop)"/><circle cx="253" cy="317" r="2.3" fill="url(#drop)"/><circle cx="357" cy="318" r="1.7" fill="url(#drop)"/><circle cx="274" cy="318" r="2.6" fill="url(#drop)"/><circle cx="165" cy="44" r="2.0" fill="url(#drop)"/><circle cx="148" cy="83" r="1.4" fill="url(#drop)"/><circle cx="303" cy="265" r="2.6" fill="url(#drop)"/><circle cx="169" cy="242" r="2.3" fill="url(#drop)"/><circle cx="166" cy="298" r="2.8" fill="url(#drop)"/><circle cx="186" cy="321" r="1.9" fill="url(#drop)"/><circle cx="256" cy="334" r="2.5" fill="url(#drop)"/><circle cx="171" cy="147" r="2.1" fill="url(#drop)"/><circle cx="217" cy="68" r="1.8" fill="url(#drop)"/><circle cx="317" cy="10" r="2.1" fill="url(#drop)"/><circle cx="244" cy="9" r="1.8" fill="url(#drop)"/><circle cx="291" cy="174" r="1.4" fill="url(#drop)"/><circle cx="385" cy="266" r="2.8" fill="url(#drop)"/></g><filter id="grain" x="0" y="0" width="100%" height="100%"><feTurbulence type="fractalNoise" baseFrequency="0.9" numOctaves="2" seed="3"/><feColorMatrix type="matrix" values="0 0 0 0 .35  0 0 0 0 .25  0 0 0 0 .4  .9 0 0 0 -.38"/></filter><rect width="492" height="338" filter="url(#grain)" opacity=".55"/><ellipse cx="222.5" cy="175.5" rx="145" ry="81" fill="none" stroke="#ee6478" stroke-opacity=".8" stroke-width="11"/></svg>
<div class="a" style="left:203px;top:385px;width:805px;height:71px;background:#222;border-radius:0 0 8px 8px"></div>
<div class="a" style="left:205px;top:387px;width:104px;height:11px;border:1px solid #aaa;background:#1c1c1c"></div>
<div class="a" style="left:207px;top:389px;width:1px;height:7px;background:#ddd"></div>
<div class="t" style="left:311px;top:385px;font-size:11px;transform:scaleX(0.8431);color:#eee">156/16000 s/px, 0.93 Ms/sec, 00:00:33/00:56:05</div>
<div class="t" style="left:606px;top:385px;font-size:11px;transform:scaleX(0.8183);color:#eee">4 Textures, 35334 Triangles, 0 Displacement, 0 Hairs. 2 Meshes, GeFor...</div>
<div class="a" style="left:902px;top:387px;width:103px;height:11px;border:1px solid #aaa;background:#1c1c1c"></div>
<div class="a" style="left:904px;top:389px;width:1px;height:7px;background:#ddd"></div>
<div class="a" style="left:997px;top:389px;width:6px;height:7px;background:#8a7a7a"></div>
<div class="t" style="left:215.5px;top:408.5px;color:#eee">FPS:</div>
<div class="a" style="left:250px;top:407px;width:80px;height:17px;background:linear-gradient(#303030,#282828);border:1px solid #101010;border-radius:3px;box-shadow:0 1px 0 #333;"></div>
<svg style="left:255px;top:411px" width="6" height="8" viewBox="0 0 6 8"><path d="M6 0 L0 4.0 L6 8 Z" fill="#e8e8e8"/></svg>
<svg style="left:318px;top:411px" width="6" height="8" viewBox="0 0 6 8"><path d="M0 0 L6 4.0 L0 8 Z" fill="#e8e8e8"/></svg>
<div class="t" style="left:273px;top:408.5px;color:#f2f2f2">24.000</div>
<div class="a" style="left:338px;top:407px;width:80px;height:17px;background:linear-gradient(#303030,#282828);border:1px solid #101010;border-radius:3px;box-shadow:0 1px 0 #333;"></div>
<div class="t" style="left:344px;top:408.5px;color:#f2f2f2">After</div>
<svg style="left:406px;top:415px" width="7" height="5" viewBox="0 0 7 5"><path d="M0 0 L7 0 L3.5 5 Z" fill="#e8e8e8"/></svg>
<div class="a" style="left:426px;top:407px;width:134px;height:17px;background:linear-gradient(#303030,#282828);border:1px solid #101010;border-radius:3px;box-shadow:0 1px 0 #333;"></div>
<div class="t" style="left:431.5px;top:408.5px;font-size:12px;transform:scaleX(0.9084);color:#f2f2f2">Shutter interval (sec):</div>
<svg style="left:548px;top:415px" width="7" height="5" viewBox="0 0 7 5"><path d="M0 0 L7 0 L3.5 5 Z" fill="#e8e8e8"/></svg>
<div class="a" style="left:568px;top:407px;width:79px;height:17px;background:linear-gradient(#303030,#282828);border:1px solid #101010;border-radius:3px;box-shadow:0 1px 0 #333;"></div>
<svg style="left:573px;top:411px" width="6" height="8" viewBox="0 0 6 8"><path d="M6 0 L0 4.0 L6 8 Z" fill="#e8e8e8"/></svg>
<svg style="left:635px;top:411px" width="6" height="8" viewBox="0 0 6 8"><path d="M0 0 L6 4.0 L0 8 Z" fill="#e8e8e8"/></svg>
<div class="t" style="left:604.5px;top:408.5px;color:#f2f2f2">0</div>
<div class="a" style="left:656px;top:407px;width:62px;height:17px;background:linear-gradient(#303030,#282828);border:1px solid #101010;border-radius:3px;box-shadow:0 1px 0 #333;"></div>
<div class="t" style="left:662px;top:408.5px;color:#f2f2f2">Frame:</div>
<svg style="left:708px;top:415px" width="7" height="5" viewBox="0 0 7 5"><path d="M0 0 L7 0 L3.5 5 Z" fill="#e8e8e8"/></svg>
<div class="a" style="left:727px;top:407px;width:79px;height:17px;background:linear-gradient(#303030,#282828);border:1px solid #101010;border-radius:3px;box-shadow:0 1px 0 #333;"></div>
<div class="t" style="left:763.5px;top:408.5px;color:#f2f2f2">0</div>
<div class="a" style="left:815px;top:417px;width:178px;height:4px;background:#b4b4b4"></div>
<div class="a" style="left:816px;top:414px;width:1px;height:3px;background:#b4b4b4"></div>
<div class="tc" style="left:804px;top:403px;width:24px;font-size:9.500px;color:#ddd">0</div>
<div class="a" style="left:843px;top:414px;width:1px;height:3px;background:#b4b4b4"></div>
<div class="tc" style="left:831px;top:403px;width:24px;font-size:9.500px;color:#ddd">20</div>
<div class="a" style="left:872px;top:414px;width:1px;height:3px;background:#b4b4b4"></div>
<div class="tc" style="left:860px;top:403px;width:24px;font-size:9.500px;color:#ddd">40</div>
<div class="a" style="left:901px;top:414px;width:1px;height:3px;background:#b4b4b4"></div>
<div class="tc" style="left:889px;top:403px;width:24px;font-size:9.500px;color:#ddd">60</div>
<div class="a" style="left:930px;top:414px;width:1px;height:3px;background:#b4b4b4"></div>
<div class="tc" style="left:918px;top:403px;width:24px;font-size:9.500px;color:#ddd">80</div>
<div class="a" style="left:959px;top:414px;width:1px;height:3px;background:#b4b4b4"></div>
<div class="tc" style="left:947px;top:403px;width:24px;font-size:9.500px;color:#ddd">100</div>
<div class="a" style="left:988px;top:414px;width:1px;height:3px;background:#b4b4b4"></div>
<div class="tc" style="left:976px;top:403px;width:24px;font-size:9.500px;color:#ddd">123</div>
<svg style="left:810px;top:417px" width="12" height="7" viewBox="0 0 12 7"><path d="M0 7 L6 0 L12 7 Z" fill="#f4f4f4"/></svg>
<div class="a" style="left:229px;top:434px;width:1px;height:18px;background:#4a4a4a"></div>
<div class="a" style="left:310px;top:434px;width:1px;height:18px;background:#4a4a4a"></div>
<div class="a" style="left:377px;top:434px;width:1px;height:18px;background:#4a4a4a"></div>
<div class="a" style="left:432px;top:434px;width:1px;height:18px;background:#4a4a4a"></div>
<div class="a" style="left:461px;top:434px;width:1px;height:18px;background:#4a4a4a"></div>
<div class="a" style="left:620px;top:434px;width:1px;height:18px;background:#4a4a4a"></div>
<div class="a" style="left:671px;top:434px;width:1px;height:18px;background:#4a4a4a"></div>
<div class="a" style="left:698px;top:434px;width:1px;height:18px;background:#4a4a4a"></div>
<div class="a" style="left:779px;top:434px;width:1px;height:18px;background:#4a4a4a"></div>
<div class="a" style="left:808px;top:434px;width:1px;height:18px;background:#4a4a4a"></div>
<svg style="left:205.0px;top:433.0px;opacity:0.32" width="20" height="20" viewBox="0 0 20 20"><rect x="1" y="1" width="16" height="15" fill="#cfe4f4" stroke="#e8e8e8" stroke-width="1"/><rect x="1.500" y="9" width="15" height="6.500" fill="#8a9a6a"/><path d="M1.500 9.500 L6 8.500 L9 6 L12 8.500 L16.500 9.500 L16.500 11 L1.500 11 Z" fill="#111"/><circle cx="6" cy="5" r="1.500" fill="#fff8c0"/><path d="M14 17 L19 17 L16.500 20 Z" fill="#999"/></svg>
<svg style="left:232.0px;top:433.0px;opacity:1" width="20" height="20" viewBox="0 0 20 20"><circle cx="10" cy="10" r="8.300" fill="#d04828"/><circle cx="10" cy="10" r="6.300" fill="#f6ece6"/><circle cx="10" cy="10" r="4.400" fill="#d04828"/><circle cx="10" cy="10" r="2.300" fill="#f6ece6"/><circle cx="10" cy="10" r="8.300" fill="none" stroke="#6a1c0c" stroke-width=".6"/><path d="M0 -1.500 L4.600 -1.500 L4.600 -4.300 L10.500 0 L4.600 4.300 L4.600 1.500 L0 1.500 Z" transform="translate(.6,.6) rotate(45)" fill="#fff" stroke="#222" stroke-width=".6"/><path d="M0 -1.500 L4.600 -1.500 L4.600 -4.300 L10.500 0 L4.600 4.300 L4.600 1.500 L0 1.500 Z" transform="translate(19.400,19.400) rotate(225)" fill="#fff" stroke="#222" stroke-width=".6"/></svg>
<svg style="left:259.0px;top:433.0px;opacity:1" width="20" height="20" viewBox="0 0 20 20"><g stroke="#f0f0f0" stroke-width="1.200" fill="none"><path d="M12 2 L18 2 L18 8 M2 12 L2 18 L8 18"/><path d="M6 6 L9 9 M14 6 L11 9 M6 14 L9 11 M14 14 L11 11"/><path d="M9 7 L9 9 L7 9 M11 7 L11 9 L13 9 M9 13 L9 11 L7 11 M11 13 L11 11 L13 11"/></g></svg>
<svg style="left:285.0px;top:433.0px;opacity:1" width="20" height="20" viewBox="0 0 20 20"><path d="M10 2 L17 6 L10 10 L3 6 Z" fill="#86c0f0"/><path d="M3 6 L10 10 L10 18 L3 14 Z" fill="#e01818"/><path d="M17 6 L10 10 L10 18 L17 14 Z" fill="#18c038"/></svg>
<div class="a" style="left:323px;top:437px;width:12px;height:13px;background:linear-gradient(#fff,#d0d0d0)"></div>
<svg style="left:346.0px;top:433.0px;opacity:1" width="20" height="20" viewBox="0 0 20 20"><rect x="3" y="4" width="2.200" height="12" fill="#f4f4f4"/><path d="M11.500 4 L5.500 10 L11.500 16 Z M17.500 4 L11.500 10 L17.500 16 Z" fill="#f4f4f4"/></svg>
<div class="a" style="left:385px;top:437px;width:4px;height:13px;background:#5a5a5a"></div>
<div class="a" style="left:392px;top:437px;width:4px;height:13px;background:#5a5a5a"></div>
<svg style="left:407.0px;top:433.0px;opacity:1" width="20" height="20" viewBox="0 0 20 20"><path d="M5 3.500 L5 16.500 L17 10 Z" fill="#f8f8f8"/></svg>
<svg style="left:436.0px;top:433.0px;opacity:0.4" width="20" height="20" viewBox="0 0 20 20"><rect x="2" y="3" width="16" height="11" fill="none" stroke="#eee" stroke-width="1.300"/><path d="M5 8.500 L15 8.500 M5 6.500 L5 10.500 M15 6.500 L15 10.500" stroke="#eee" stroke-width="1"/><rect x="8" y="14" width="4" height="2" fill="#eee"/><rect x="5" y="16" width="10" height="1.500" fill="#eee"/></svg>
<svg style="left:464px;top:433px;opacity:.5" width="22" height="20" viewBox="0 0 22 20"><text x="1" y="17" font-family="Liberation Sans,sans-serif" font-size="11" fill="#ccc">AF</text><path d="M18 2 L18 13 M16.500 5 L19.500 5" stroke="#9ab" stroke-width="1.500"/></svg>
<svg style="left:490.0px;top:433.0px;opacity:0.55" width="20" height="20" viewBox="0 0 20 20"><circle cx="8" cy="11" r="7" fill="#a06080"/><path d="M8 11 L8 4 A7 7 0 0 1 14 14.500 Z" fill="#80a060"/><path d="M8 11 L14 14.500 A7 7 0 0 1 2 14.500 Z" fill="#6080a0"/><path d="M16 1 L16 8 M15 3 L17 3" stroke="#9ab" stroke-width="1.500"/></svg>
<svg style="left:516.0px;top:433.0px;opacity:1" width="20" height="20" viewBox="0 0 20 20"><circle cx="8" cy="11" r="7" fill="#1a1a1a" stroke="#ddd" stroke-width="1"/><circle cx="6" cy="8.500" r="2.500" fill="#fff" opacity=".9"/><path d="M16 1 L16 8 M15 3 L17 3" stroke="#9ab" stroke-width="1.500"/></svg>
<svg style="left:543.0px;top:433.0px;opacity:0.4" width="20" height="20" viewBox="0 0 20 20"><path d="M6 4 L2 16 Q6 18 10 16 Z" fill="#8090a0"/><circle cx="11" cy="14" r="3.500" fill="#a05030"/><path d="M16 1 L16 8 M15 3 L17 3" stroke="#9ab" stroke-width="1.500"/></svg>
<svg style="left:568.0px;top:433.0px;opacity:0.4" width="20" height="20" viewBox="0 0 20 20"><rect x="1" y="7" width="14" height="10" rx="1" fill="#555" stroke="#aaa" stroke-width=".7"/><circle cx="9" cy="12" r="3.500" fill="#222" stroke="#bbb"/><circle cx="9" cy="12" r="1.500" fill="#a02020"/><path d="M16 1 L16 8 M15 3 L17 3" stroke="#9ab" stroke-width="1.500"/></svg>
<svg style="left:593.0px;top:433.0px;opacity:0.45" width="20" height="20" viewBox="0 0 20 20"><rect x="2" y="8" width="10" height="9" fill="none" stroke="#c03030" stroke-width="1.500"/><path d="M16 1 L16 8 M15 3 L17 3" stroke="#9ab" stroke-width="1.500"/></svg>
<svg style="left:623.0px;top:433.0px;opacity:1" width="20" height="20" viewBox="0 0 20 20"><circle cx="9" cy="9" r="7" fill="#8a98a8" stroke="#ddd" stroke-width="1.200"/><path d="M2 2 L17 17" stroke="#111" stroke-width="1.500"/><path d="M14 16 L20 16 L17 20 Z" fill="#fff"/></svg>
<svg style="left:647.0px;top:433.0px;opacity:1" width="20" height="20" viewBox="0 0 20 20"><defs><pattern id="chk" width="2" height="2" patternUnits="userSpaceOnUse"><rect width="1" height="1" fill="#eee"/><rect x="1" y="1" width="1" height="1" fill="#eee"/></pattern></defs><rect x="2" y="2" width="14" height="14" fill="#333"/><rect x="2" y="2" width="14" height="14" fill="url(#chk)"/><path d="M14 16 L20 16 L17 20 Z" fill="#fff"/></svg>
<svg style="left:674.0px;top:433.0px;opacity:1" width="20" height="20" viewBox="0 0 20 20"><g stroke-width="1.300"><path d="M3 13 L1 14" stroke="#30a050"/><path d="M3.500 9 L1.500 8" stroke="#30a050"/><path d="M6 5.500 L5 3.500" stroke="#30a050"/><path d="M10 4.500 L10 2.500" stroke="#eee"/><path d="M14 5.500 L15 3.500" stroke="#c03030"/><path d="M16.500 9 L18.500 8" stroke="#c03030"/></g><path d="M10 15 L15 8" stroke="#eee" stroke-width="1.200"/><path d="M14 16 L20 16 L17 20 Z" fill="#fff"/></svg>
<svg style="left:701.0px;top:433.0px;opacity:1" width="20" height="20" viewBox="0 0 20 20"><rect x="2" y="3" width="11" height="14" fill="#888" stroke="#ddd" stroke-width="1"/><rect x="5" y="1.500" width="5" height="3" fill="#ddd"/><rect x="6" y="8" width="12" height="10" fill="#cfe4f4" stroke="#eee" stroke-width="1"/><rect x="6.500" y="13" width="11" height="4.500" fill="#7f9a5c"/></svg>
<svg style="left:727.0px;top:433.0px;opacity:1" width="20" height="20" viewBox="0 0 20 20"><rect x="6" y="2" width="12" height="10" fill="#cfe4f4" stroke="#eee" stroke-width="1"/><rect x="6.500" y="7.500" width="11" height="4" fill="#5a6a4a"/><path d="M4 5 L4 14 M1 11 L4 15.500 L7 11" stroke="#30c040" stroke-width="2.200" fill="none"/></svg>
<svg style="left:753.0px;top:433.0px;opacity:1" width="20" height="20" viewBox="0 0 20 20"><rect x="1.500" y="1.500" width="17" height="17" fill="#ddd" stroke="#eee" stroke-width="1"/><path d="M2 2 L18 2 L2 18 Z" fill="#c8a040"/><path d="M2 12 L8 8 L2 18 Z" fill="#507030"/><g fill="#444"><rect x="10" y="10" width="4" height="4"/><rect x="14" y="14" width="4" height="4"/><rect x="14" y="6" width="4" height="4"/><rect x="6" y="14" width="4" height="4"/></g></svg>
<svg style="left:782.0px;top:433.0px;opacity:0.6" width="20" height="20" viewBox="0 0 20 20"><rect x="6" y="10" width="11" height="8" fill="#666"/><path d="M3 10 L3 6 A3.500 3.500 0 0 1 10 6 L10 10" fill="none" stroke="#777" stroke-width="1.500"/><path d="M6 13 L17 13 M6 15.500 L17 15.500" stroke="#444" stroke-width=".8"/></svg>
<svg style="left:959.0px;top:434.0px;opacity:1" width="18" height="18" viewBox="0 0 20 20"><circle cx="4.200" cy="15.800" r="2.600" fill="none" stroke="#f0f0f0" stroke-width="1.600"/><path d="M6 14 L12 8" stroke="#f0f0f0" stroke-width="2.600"/><path d="M17 2.200 L14 5.200 L14.800 6.800 L16.800 6.800 L18.800 4.800 A4.500 4.500 0 1 1 14.500 1.200 Z" fill="#f0f0f0"/></svg>
<svg style="left:988px;top:436px" width="14" height="14" viewBox="0 0 16 16"><g stroke="#f4f4f4" stroke-width="1.4" fill="#f4f4f4"><path d="M1 1 L5.5 5.5 M15 1 L10.5 5.5 M1 15 L5.5 10.5 M15 15 L10.5 10.5"/><path d="M.5 .5 L4.5 .5 L.5 4.5 Z M15.500 .5 L11.5 .5 L15.5 4.5 Z M.5 15.5 L4.5 15.5 L.5 11.5 Z M15.5 15.5 L11.5 15.5 L15.5 11.5 Z" stroke="none"/></g></svg>
<div class="a" style="left:203px;top:460px;width:805px;height:247px;background:#252525;border-radius:8px 0 0 0"></div>
<div class="a" style="left:229px;top:482px;width:779px;height:225px;background:#474747;overflow:hidden"><svg style="left:0;top:0" width="779" height="225" viewBox="229 482 779 225"><defs>
<linearGradient id="nmat" x1="0" y1="0" x2="0" y2="1"><stop offset="0" stop-color="#6b6859"/><stop offset=".42" stop-color="#545043"/><stop offset="1" stop-color="#4e4a3f"/></linearGradient>
<linearGradient id="ngeo" x1="0" y1="0" x2="0" y2="1"><stop offset="0" stop-color="#6a5a66"/><stop offset=".42" stop-color="#503f4c"/><stop offset="1" stop-color="#4a3b47"/></linearGradient>
<linearGradient id="ncell" x1="0" y1="0" x2="0" y2="1"><stop offset="0" stop-color="#a0a0a0"/><stop offset="1" stop-color="#868686"/></linearGradient>
</defs><path d="M229 626 Q440 650 617.500 680" fill="none" stroke="#cfc39b" stroke-width="1.500"/><path d="M229 641.700 Q440 656 597 680" fill="none" stroke="#cfc39b" stroke-width="1.500"/><path d="M229 652.800 Q400 660 516.500 680" fill="none" stroke="#cfc39b" stroke-width="1.500"/><path d="M389.500 604 C400 625 520 650 637.500 680" fill="none" stroke="#cfc39b" stroke-width="1.500"/><path d="M659.500 604 L657.500 680" fill="none" stroke="#cfc39b" stroke-width="1.500"/><path d="M919.800 604 C905 625 760 640 677.500 680" fill="none" stroke="#cfc39b" stroke-width="1.500"/><path d="M1008 634 Q800 650 697.500 680" fill="none" stroke="#cfc39b" stroke-width="1.500"/><path d="M1008 648 Q820 658 717.500 680" fill="none" stroke="#cfc39b" stroke-width="1.500"/><path d="M1008 654.500 Q830 664 737.500 680" fill="none" stroke="#cfc39b" stroke-width="1.500"/><rect x="200" y="580" width="49.5" height="24" rx="6" fill="url(#nmat)" stroke="#1c1c1c" stroke-width="1"/><rect x="259.5" y="580" width="260" height="24" rx="6" fill="url(#nmat)" stroke="#1c1c1c" stroke-width="1"/><path d="M265.5 580.5 L284.5 580.5 L284.5 603.5 L265.5 603.5 Q260.0 603.5 260.0 598 L260.0 586 Q260.0 580.5 265.5 580.5 Z" fill="url(#ncell)" stroke="#1c1c1c" stroke-width="1"/><rect x="530" y="580" width="259.5" height="24" rx="6" fill="url(#nmat)" stroke="#1c1c1c" stroke-width="1"/><path d="M536 580.5 L555 580.5 L555 603.5 L536 603.5 Q530.5 603.5 530.5 598 L530.5 586 Q530.5 580.5 536 580.5 Z" fill="url(#ncell)" stroke="#1c1c1c" stroke-width="1"/><rect x="799.5" y="580" width="260" height="24" rx="6" fill="url(#nmat)" stroke="#1c1c1c" stroke-width="1"/><path d="M805.5 580.5 L824.5 580.5 L824.5 603.5 L805.5 603.5 Q800.0 603.5 800.0 598 L800.0 586 Q800.0 580.5 805.5 580.5 Z" fill="url(#ncell)" stroke="#1c1c1c" stroke-width="1"/><circle cx="279.5" cy="579.5" r="4.400" fill="#8fcaa8"/><circle cx="549.5" cy="579.5" r="4.400" fill="#8fcaa8"/><circle cx="299.5" cy="579.5" r="4.400" fill="#8fcaa8"/><circle cx="569.5" cy="579.5" r="4.400" fill="#8fcaa8"/><circle cx="319.5" cy="579.5" r="4.400" fill="#8fcaa8"/><circle cx="589.5" cy="579.5" r="4.400" fill="#8fcaa8"/><circle cx="339.5" cy="579.5" r="3.900" fill="#474747" stroke="#8fcaa8" stroke-width="1.500"/><circle cx="609.5" cy="579.5" r="3.900" fill="#474747" stroke="#8fcaa8" stroke-width="1.500"/><circle cx="359.5" cy="579.5" r="3.900" fill="#474747" stroke="#8fcaa8" stroke-width="1.500"/><circle cx="629.5" cy="579.5" r="3.900" fill="#474747" stroke="#8fcaa8" stroke-width="1.500"/><circle cx="379.5" cy="579.5" r="3.900" fill="#474747" stroke="#d0d0d0" stroke-width="1.500"/><circle cx="649.5" cy="579.5" r="3.900" fill="#474747" stroke="#d0d0d0" stroke-width="1.500"/><circle cx="399.5" cy="579.5" r="4.400" fill="#8fcaa8"/><circle cx="669.5" cy="579.5" r="4.400" fill="#8fcaa8"/><circle cx="419.5" cy="579.5" r="4.400" fill="#c28aba"/><circle cx="689.5" cy="579.5" r="4.400" fill="#c28aba"/><circle cx="439.5" cy="579.5" r="4.400" fill="#6b9bd2"/><circle cx="709.5" cy="579.5" r="4.400" fill="#6b9bd2"/><circle cx="459.5" cy="579.5" r="4.400" fill="#6b9bd2"/><circle cx="729.5" cy="579.5" r="4.400" fill="#6b9bd2"/><circle cx="479.5" cy="579.5" r="4.400" fill="#8fcaa8"/><circle cx="749.5" cy="579.5" r="4.400" fill="#8fcaa8"/><circle cx="499.5" cy="579.5" r="4.400" fill="#6b9bd2"/><circle cx="769.5" cy="579.5" r="4.400" fill="#6b9bd2"/><circle cx="819.5" cy="579.5" r="4.400" fill="#8fcaa8"/><circle cx="839.5" cy="579.5" r="3.900" fill="#474747" stroke="#8fcaa8" stroke-width="1.500"/><circle cx="859.5" cy="579.5" r="3.900" fill="#474747" stroke="#8fcaa8" stroke-width="1.500"/><circle cx="879.5" cy="579.5" r="3.900" fill="#474747" stroke="#d0d0d0" stroke-width="1.500"/><circle cx="899.5" cy="579.5" r="4.400" fill="#8fcaa8"/><circle cx="919.5" cy="579.5" r="4.400" fill="#c28aba"/><circle cx="939.5" cy="579.5" r="4.400" fill="#6b9bd2"/><circle cx="959.5" cy="579.5" r="3.900" fill="#474747" stroke="#d0d0d0" stroke-width="1.500"/><circle cx="979.5" cy="579.5" r="3.900" fill="#474747" stroke="#8fcaa8" stroke-width="1.500"/><circle cx="999.5" cy="579.5" r="3.900" fill="#474747" stroke="#d0d0d0" stroke-width="1.500"/><circle cx="232" cy="579.5" r="4.400" fill="#6b9bd2"/><circle cx="389.5" cy="604" r="3.900" fill="#45423a" stroke="#cfc39b" stroke-width="1.500"/><circle cx="659.5" cy="604" r="3.900" fill="#45423a" stroke="#cfc39b" stroke-width="1.500"/><circle cx="919.8" cy="604" r="3.900" fill="#45423a" stroke="#cfc39b" stroke-width="1.500"/><rect x="465.5" y="680" width="102.5" height="24" rx="6" fill="url(#ngeo)" stroke="#1c1c1c" stroke-width="1"/><path d="M471.5 680.5 L490.5 680.5 L490.5 703.5 L471.5 703.5 Q466.0 703.5 466.0 698 L466.0 686 Q466.0 680.5 471.5 680.5 Z" fill="url(#ncell)" stroke="#1c1c1c" stroke-width="1"/><rect x="577.5" y="680" width="181" height="24" rx="6" fill="url(#ngeo)" stroke="#1c1c1c" stroke-width="1"/><path d="M583.5 680.5 L602.5 680.5 L602.5 703.5 L583.5 703.5 Q578.0 703.5 578.0 698 L578.0 686 Q578.0 680.5 583.5 680.5 Z" fill="url(#ncell)" stroke="#1c1c1c" stroke-width="1"/><rect x="731" y="673.500" width="13" height="13" fill="#6a6550" stroke="#cfc39b" stroke-width="2"/><circle cx="516.5" cy="679.5" r="3.900" fill="#4f444c" stroke="#cfc39b" stroke-width="1.500"/><circle cx="597.5" cy="679.5" r="3.900" fill="#4f444c" stroke="#cfc39b" stroke-width="1.500"/><circle cx="617.5" cy="679.5" r="3.900" fill="#4f444c" stroke="#cfc39b" stroke-width="1.500"/><circle cx="637.5" cy="679.5" r="3.900" fill="#4f444c" stroke="#cfc39b" stroke-width="1.500"/><circle cx="657.5" cy="679.5" r="3.900" fill="#4f444c" stroke="#cfc39b" stroke-width="1.500"/><circle cx="677.5" cy="679.5" r="3.900" fill="#4f444c" stroke="#cfc39b" stroke-width="1.500"/><circle cx="697.5" cy="679.5" r="3.900" fill="#4f444c" stroke="#cfc39b" stroke-width="1.500"/><circle cx="717.5" cy="679.5" r="3.900" fill="#4f444c" stroke="#cfc39b" stroke-width="1.500"/><circle cx="737.5" cy="679.5" r="3.900" fill="#4f444c" stroke="#cfc39b" stroke-width="1.500"/><circle cx="516.5" cy="704.5" r="3.900" fill="#443842" stroke="#c28aba" stroke-width="1.500"/><circle cx="667" cy="704.5" r="3.900" fill="#443842" stroke="#c28aba" stroke-width="1.500"/><text x="401" y="596" text-anchor="middle" font-family="Liberation Sans,sans-serif" font-size="12" fill="#f0f0f0" textLength="36" lengthAdjust="spacingAndGlyphs">chrome</text><text x="671" y="596" text-anchor="middle" font-family="Liberation Sans,sans-serif" font-size="12" fill="#f0f0f0" textLength="39" lengthAdjust="spacingAndGlyphs">plastic2</text><text x="931" y="596" text-anchor="middle" font-family="Liberation Sans,sans-serif" font-size="12" fill="#f0f0f0" textLength="28" lengthAdjust="spacingAndGlyphs">black</text><text x="528" y="696" text-anchor="middle" font-family="Liberation Sans,sans-serif" font-size="12" fill="#f0f0f0" textLength="55" lengthAdjust="spacingAndGlyphs">Plane mesh</text><text x="679" y="696" text-anchor="middle" font-family="Liberation Sans,sans-serif" font-size="12" fill="#f0f0f0" textLength="72" lengthAdjust="spacingAndGlyphs">Mesh (2) mesh</text></svg><svg style="left:35px;top:102px" width="16" height="16" viewBox="0 0 16 16"><circle cx="8" cy="8" r="7.3" fill="url(#gg)" stroke="#26302c" stroke-width=".9"/><circle cx="8" cy="8" r="6.500" fill="none" stroke="#e8f4f0" stroke-opacity=".45" stroke-width=".7"/><circle cx="8" cy="8" r="7" fill="url(#hl)"/><circle cx="11.300" cy="11.300" r="1" fill="#d8e060" opacity=".8"/></svg><svg style="left:305px;top:102px" width="16" height="16" viewBox="0 0 16 16"><circle cx="8" cy="8" r="7.3" fill="url(#gg)" stroke="#26302c" stroke-width=".9"/><circle cx="8" cy="8" r="6.500" fill="none" stroke="#e8f4f0" stroke-opacity=".45" stroke-width=".7"/><circle cx="8" cy="8" r="7" fill="url(#hl)"/><circle cx="11.300" cy="11.300" r="1" fill="#d8e060" opacity=".8"/></svg><svg style="left:575px;top:102px" width="16" height="16" viewBox="0 0 16 16"><circle cx="8" cy="8" r="7.3" fill="url(#gb)" stroke="#2a2a2a" stroke-width=".8"/></svg><svg style="left:241px;top:202px" width="16" height="16" viewBox="0 0 16 16"><path d="M6.500 .5 L1 13 Q6 15.500 11 13 Z" fill="url(#gc)" stroke="#f0f6fa" stroke-opacity=".6" stroke-width=".6"/><circle cx="11" cy="11.3" r="4.3" fill="url(#go)" stroke="#702000" stroke-width=".4"/></svg><svg style="left:353px;top:202px" width="16" height="16" viewBox="0 0 16 16"><path d="M6.500 .5 L1 13 Q6 15.500 11 13 Z" fill="url(#gc)" stroke="#f0f6fa" stroke-opacity=".6" stroke-width=".6"/><circle cx="11" cy="11.3" r="4.3" fill="url(#go)" stroke="#702000" stroke-width=".4"/></svg><div class="a" style="left:0;top:0;width:100px;height:99.500px;background:#3a3a3a;border-right:1px solid #0c0c0c;border-bottom:1px solid #0c0c0c"></div><svg style="left:0;top:0" width="100" height="100" viewBox="229 482 100 100"><rect x="232.0" y="521" width="10" height="2" fill="#d8c898"/><rect x="242.7" y="521" width="10" height="2" fill="#d8c898"/><rect x="253.4" y="521" width="10" height="2" fill="#d8c898"/><rect x="264.1" y="521" width="10" height="2" fill="#d8c898"/><rect x="274.8" y="521" width="10" height="2" fill="#d8c898"/><rect x="285.5" y="521" width="10" height="2" fill="#d8c898"/><rect x="296.2" y="521" width="10" height="2" fill="#d8c898"/><rect x="306.9" y="521" width="10" height="2" fill="#d8c898"/><rect x="317.500" y="521" width="9" height="2" fill="#fff"/><rect x="263.500" y="518.500" width="30.500" height="8" fill="#a08a2a" fill-opacity=".25" stroke="#b89a28" stroke-width="1"/><rect x="272" y="525.500" width="12" height="1.500" fill="#d0a0a0"/><rect x="273" y="529.500" width="10" height="2" fill="#d898c8"/><rect x="273" y="533.500" width="8" height="2" fill="#d898c8"/><rect x="232" y="537.500" width="16" height="2" fill="#40d0d8"/><rect x="248" y="537.500" width="6" height="2" fill="#6070d8"/><rect x="254" y="537.500" width="11" height="2" fill="#50d050"/><rect x="265" y="537.500" width="10" height="2" fill="#d8a848"/><rect x="275" y="537.500" width="5" height="2" fill="#d898c8"/><rect x="280" y="537.500" width="7" height="2" fill="#e040d0"/><rect x="260" y="541.500" width="7" height="2" fill="#bbb"/></svg></div>
<svg style="left:229px;top:462px" width="70" height="21" viewBox="0 0 70 21"><path d="M3 21 L3 6 Q3 1.500 8 1.500 L46 1.500 Q50 1.500 52.500 5 L60 17 Q62 20 65 20.500 L65 21 Z" fill="#3f3f3f" stroke="#151515" stroke-width="1"/></svg>
<div class="t" style="left:247px;top:466px;color:#ddd">Scene</div>
<div class="a" style="left:207px;top:486px;width:18px;height:1px;background:#4a4a4a"></div>
<div class="a" style="left:207px;top:515px;width:18px;height:1px;background:#4a4a4a"></div>
<div class="a" style="left:207px;top:570px;width:18px;height:1px;background:#4a4a4a"></div>
<div class="a" style="left:207px;top:677px;width:18px;height:1px;background:#4a4a4a"></div>
<svg style="left:206.0px;top:462.0px;opacity:1" width="20" height="20" viewBox="0 0 20 20"><path d="M5 4 C0 4 0 10 6 10 L12 10 C18 10 18 16 12 16 L8 16" fill="none" stroke="#9cc4ec" stroke-width="1.600"/><rect x="6" y="2.500" width="4" height="3" fill="#eee"/><rect x="10" y="3" width="2" height="2" fill="#d04020"/><rect x="12" y="3.300" width="4" height="1.400" fill="#f0d040"/><rect x="3" y="14.500" width="2" height="3" fill="#f0d040"/><rect x="5" y="14.500" width="2" height="3" fill="#d04020"/><rect x="7" y="14.500" width="3" height="3" fill="#eee"/><path d="M14 16 L19 16 L16.500 19.500 Z" fill="#fff"/></svg>
<svg style="left:206.0px;top:490.0px;opacity:1" width="20" height="20" viewBox="0 0 20 20"><circle cx="10" cy="10" r="8.300" fill="#d04828"/><circle cx="10" cy="10" r="6.300" fill="#f6ece6"/><circle cx="10" cy="10" r="4.400" fill="#d04828"/><circle cx="10" cy="10" r="2.300" fill="#f6ece6"/><circle cx="10" cy="10" r="8.300" fill="none" stroke="#6a1c0c" stroke-width=".6"/><path d="M0 -1.500 L4.600 -1.500 L4.600 -4.300 L10.500 0 L4.600 4.300 L4.600 1.500 L0 1.500 Z" transform="translate(.6,.6) rotate(45)" fill="#fff" stroke="#222" stroke-width=".6"/><path d="M0 -1.500 L4.600 -1.500 L4.600 -4.300 L10.500 0 L4.600 4.300 L4.600 1.500 L0 1.500 Z" transform="translate(19.400,19.400) rotate(225)" fill="#fff" stroke="#222" stroke-width=".6"/></svg>
<svg style="left:206.0px;top:519.0px;opacity:1" width="20" height="20" viewBox="0 0 20 20"><g fill="#f4f4f4"><ellipse cx="6" cy="4" rx="3" ry="2"/><ellipse cx="14" cy="4" rx="3" ry="2"/><ellipse cx="10" cy="10" rx="3.500" ry="2"/><ellipse cx="6" cy="16" rx="3" ry="2"/><ellipse cx="14" cy="16" rx="3" ry="2"/></g><path d="M6 4 L10 10 L14 4 M6 16 L10 10 L14 16" stroke="#9cc4ec" stroke-width="1" fill="none"/><path d="M0 10 L3.500 7 L3.500 13 Z M20 10 L16.500 7 L16.500 13 Z" fill="#e05030"/></svg>
<svg style="left:206.0px;top:544.0px;opacity:1" width="20" height="20" viewBox="0 0 20 20"><rect x="1.500" y="1" width="17" height="12" fill="none" stroke="#f4f4f4" stroke-width="1.200"/><g transform="translate(3,1.500) scale(.7)"><g fill="#f4f4f4"><ellipse cx="6" cy="4" rx="3" ry="2"/><ellipse cx="14" cy="4" rx="3" ry="2"/><ellipse cx="10" cy="10" rx="3.500" ry="2"/><ellipse cx="6" cy="16" rx="3" ry="2"/><ellipse cx="14" cy="16" rx="3" ry="2"/></g><path d="M6 4 L10 10 L14 4 M6 16 L10 10 L14 16" stroke="#9cc4ec" stroke-width="1" fill="none"/></g><g fill="#f4f4f4"><ellipse cx="6" cy="17" rx="3" ry="2"/><ellipse cx="14" cy="17" rx="3" ry="2"/></g><path d="M3 7 L5.500 5 L5.500 9 Z M17 7 L14.500 5 L14.500 9 Z" fill="#e05030"/></svg>
<svg style="left:206.0px;top:574.0px;opacity:1" width="20" height="20" viewBox="0 0 20 20"><rect x="2" y="5" width="13" height="13" fill="#cfe4f4" stroke="#eee" stroke-width="1"/><rect x="2.500" y="12" width="12" height="5.500" fill="#8a9a5a"/><path d="M2.500 12 L6 11 L8 9 L10 11 L14.500 12 L14.500 13 L2.500 13 Z" fill="#111"/><ellipse cx="14" cy="4" rx="5" ry="3" fill="#fff"/><circle cx="14" cy="4" r="2" fill="#2050a0"/></svg>
<svg style="left:206.0px;top:600.0px;opacity:1" width="20" height="20" viewBox="0 0 20 20"><path d="M7 5 L2 17 Q7 19 11 17 Z" fill="url(#gc)"/><circle cx="12" cy="15" r="4" fill="url(#go)"/><ellipse cx="14" cy="4" rx="5" ry="3" fill="#fff"/><circle cx="14" cy="4" r="2" fill="#2050a0"/></svg>
<svg style="left:206.0px;top:626.0px;opacity:1" width="20" height="20" viewBox="0 0 20 20"><defs><radialGradient id="dsp" cx="35%" cy="30%" r="75%"><stop offset="0" stop-color="#aaa"/><stop offset=".5" stop-color="#333"/><stop offset="1" stop-color="#111"/></radialGradient></defs><circle cx="9" cy="12" r="7" fill="url(#dsp)" stroke="#bbb" stroke-width=".9"/><circle cx="6.500" cy="9.500" r="2" fill="#fff" opacity=".9"/><ellipse cx="14" cy="4" rx="5" ry="3" fill="#fff"/><circle cx="14" cy="4" r="2" fill="#2050a0"/></svg>
<svg style="left:206.0px;top:652.0px;opacity:0.55" width="20" height="20" viewBox="0 0 20 20"><path d="M3 8 L16 8 L16 18 L3 18 Z" fill="#8a98a8"/><path d="M3 14 L9 8 M3 18 L13 8 M7 18 L16 9 M11 18 L16 13" stroke="#333" stroke-width="1.600"/><ellipse cx="14" cy="5" rx="4" ry="2.400" fill="#aaa"/></svg>
<svg style="left:206.0px;top:688.0px;opacity:1" width="20" height="20" viewBox="0 0 20 20"><circle cx="10" cy="10" r="3.200" fill="#777"/><path d="M8 10 L12 10 M10 8 L10 12" stroke="#333" stroke-width="1"/></svg>
<div class="a" style="left:1012px;top:47px;width:354px;height:660px;background:#242424;border-radius:8px 0 0 0"></div>
<div class="a" style="left:0px;top:0px;width:1366px;height:707px;overflow:hidden;pointer-events:none"><div class="a" style="left:1049px;top:47.5px;width:298.5px;height:700px;background:linear-gradient(#444 0,#303030 22px,#303030 100%);border:1px solid #1a1a1a;border-radius:5px 6px 0 0"></div><div class="a" style="left:1043px;top:47.5px;width:22.5px;height:21.5px;background:linear-gradient(135deg,#b0a78c,#8f8770);border:1px solid #1c1c1c;border-radius:5px"></div><svg style="left:1047px;top:50px" width="15" height="15" viewBox="0 0 16 16"><circle cx="8" cy="8" r="7.3" fill="url(#gb)" stroke="#2a2a2a" stroke-width=".8"/></svg><svg style="left:1070px;top:54px" width="8" height="8" viewBox="0 0 8 8"><path d="M0 0 L8 0 L4.0 8 Z" fill="#f4f4f4"/></svg><div class="t" style="left:1088.5px;top:51px;font-size:12px;font-weight:bold;transform:scaleX(0.9124);color:#fff">body:</div><div class="t" style="left:1126px;top:51px;transform:scaleX(.875);color:#eee">body</div><div class="a" style="left:1218.5px;top:50px;width:105px;height:15px;background:linear-gradient(#2c2c2c,#222);border:1px solid #111;border-radius:3px;box-shadow:0 1px 0 rgba(255,255,255,.12)"></div><div class="t" style="left:1224.5px;top:50.7px;font-size:12px;transform:scaleX(0.8753);color:#f2f2f2">Diffuse</div><svg style="left:1311.5px;top:58px" width="7" height="4.5" viewBox="0 0 7 4.5"><path d="M0 0 L7 0 L3.5 4.5 Z" fill="#ddd"/></svg><div class="a" style="left:1328px;top:50px;width:14.5px;height:15px;background:linear-gradient(#2c2c2c,#1e1e1e);border:1px solid #111;border-radius:3px"></div><svg style="left:1330.5px;top:54px" width="10" height="7" viewBox="0 0 10 7"><path d="M0 3.500 Q5 -1.200 10 3.500 Q5 8.200 0 3.500 Z" fill="#fff"/><circle cx="4.600" cy="3.200" r="1.700" fill="#111"/><circle cx="4" cy="2.600" r=".6" fill="#bbb"/></svg><div class="a" style="left:1061px;top:84px;width:282.5px;height:72.5px;background:#484848;border:1px solid #1e1e1e;border-radius:0 0 5px 5px"></div><div class="a" style="left:1059px;top:74px;width:284.5px;height:21px;background:linear-gradient(#5c5c5c,#484848);border:1px solid #1e1e1e;border-bottom:none;border-radius:5px 5px 0 0"></div><div class="a" style="left:1055px;top:74px;width:22.5px;height:21px;background:linear-gradient(135deg,#a8c6b6,#7d9a8a);border:1px solid #1c1c1c;border-radius:5px"></div><svg style="left:1082px;top:80px" width="8" height="8" viewBox="0 0 8 8"><path d="M0 0 L8 0 L4.0 8 Z" fill="#f4f4f4"/></svg><div class="t" style="left:1100px;top:77px;transform:scaleX(.875);">Diffuse</div><div class="a" style="left:1214.5px;top:76.5px;width:105px;height:15px;background:linear-gradient(#2c2c2c,#222);border:1px solid #111;border-radius:3px;box-shadow:0 1px 0 rgba(255,255,255,.12)"></div><div class="t" style="left:1220.5px;top:77.2px;font-size:12px;transform:scaleX(0.8153);color:#f2f2f2">RGB Color</div><svg style="left:1307.5px;top:84.5px" width="7" height="4.5" viewBox="0 0 7 4.5"><path d="M0 0 L7 0 L3.5 4.5 Z" fill="#ddd"/></svg><div class="a" style="left:1324px;top:76.5px;width:14.5px;height:15px;background:linear-gradient(#2c2c2c,#1e1e1e);border:1px solid #111;border-radius:3px"></div><svg style="left:1326.5px;top:80.5px" width="10" height="7" viewBox="0 0 10 7"><path d="M0 3.500 Q5 -1.200 10 3.500 Q5 8.200 0 3.500 Z" fill="#fff"/><circle cx="4.600" cy="3.200" r="1.700" fill="#111"/><circle cx="4" cy="2.600" r=".6" fill="#bbb"/></svg><div class="a" style="left:1066.5px;top:99.5px;width:43px;height:53.5px;background:#808080;border:1px solid #9a9a9a;border-radius:2px"></div><div class="a" style="left:1115px;top:99.5px;width:224px;height:15.5px;background:linear-gradient(#3a3a3a,#2c2c2c);border:1px solid #141414;border-radius:3px;overflow:hidden"><div class="a" style="left:0;top:0;width:48.4px;height:100%;background:linear-gradient(#242424,#161616)"></div></div><svg style="left:1121px;top:104.0px" width="5.5" height="6.5" viewBox="0 0 5.5 6.5"><path d="M5.5 0 L0 3.25 L5.5 6.5 Z" fill="#ddd"/></svg><svg style="left:1328px;top:104.0px" width="5.5" height="6.5" viewBox="0 0 5.5 6.5"><path d="M0 0 L5.5 3.25 L0 6.5 Z" fill="#ddd"/></svg><div class="tc" style="left:1115px;top:100.0px;width:224px;color:#f4f4f4">0.216</div><div class="a" style="left:1115px;top:118.5px;width:224px;height:15.5px;background:linear-gradient(#3a3a3a,#2c2c2c);border:1px solid #141414;border-radius:3px;overflow:hidden"><div class="a" style="left:0;top:0;width:48.4px;height:100%;background:linear-gradient(#242424,#161616)"></div></div><svg style="left:1121px;top:123.0px" width="5.5" height="6.5" viewBox="0 0 5.5 6.5"><path d="M5.5 0 L0 3.25 L5.5 6.5 Z" fill="#ddd"/></svg><svg style="left:1328px;top:123.0px" width="5.5" height="6.5" viewBox="0 0 5.5 6.5"><path d="M0 0 L5.5 3.25 L0 6.5 Z" fill="#ddd"/></svg><div class="tc" style="left:1115px;top:119.0px;width:224px;color:#f4f4f4">0.216</div><div class="a" style="left:1115px;top:137.5px;width:224px;height:15.5px;background:linear-gradient(#3a3a3a,#2c2c2c);border:1px solid #141414;border-radius:3px;overflow:hidden"><div class="a" style="left:0;top:0;width:48.4px;height:100%;background:linear-gradient(#242424,#161616)"></div></div><svg style="left:1121px;top:142.0px" width="5.5" height="6.5" viewBox="0 0 5.5 6.5"><path d="M5.5 0 L0 3.25 L5.5 6.5 Z" fill="#ddd"/></svg><svg style="left:1328px;top:142.0px" width="5.5" height="6.5" viewBox="0 0 5.5 6.5"><path d="M0 0 L5.5 3.25 L0 6.5 Z" fill="#ddd"/></svg><div class="tc" style="left:1115px;top:138.0px;width:224px;color:#f4f4f4">0.216</div><div class="a" style="left:1059px;top:162px;width:284.5px;height:21px;background:linear-gradient(#525252,#444);border:1px solid #1e1e1e;border-radius:5px"></div><div class="a" style="left:1055px;top:162px;width:22px;height:21px;background:linear-gradient(#a8c6b6,#7d9a8a);border:1px solid #1c1c1c;border-radius:5px 0 0 5px"></div><div class="t" style="left:1100px;top:165px;transform:scaleX(.875);">Bump</div><div class="a" style="left:1234.5px;top:164.5px;width:105px;height:15px;background:linear-gradient(#2c2c2c,#222);border:1px solid #111;border-radius:3px;box-shadow:0 1px 0 rgba(255,255,255,.12)"></div><div class="t" style="left:1240.5px;top:165.2px;font-size:12px;transform:scaleX(0.8597);color:#8a8a8a">No node</div><svg style="left:1327.5px;top:172.5px" width="7" height="4.5" viewBox="0 0 7 4.5"><path d="M0 0 L7 0 L3.5 4.5 Z" fill="#ddd"/></svg><div class="a" style="left:1061px;top:198px;width:282.5px;height:417.5px;background:#484848;border:1px solid #1e1e1e;border-radius:0 0 5px 5px"></div><div class="a" style="left:1059px;top:188px;width:284.5px;height:21px;background:linear-gradient(#5c5c5c,#484848);border:1px solid #1e1e1e;border-bottom:none;border-radius:5px 5px 0 0"></div><div class="a" style="left:1055px;top:188px;width:22.5px;height:21px;background:linear-gradient(135deg,#a8c6b6,#7d9a8a);border:1px solid #1c1c1c;border-radius:5px"></div><svg style="left:1082px;top:194px" width="8" height="8" viewBox="0 0 8 8"><path d="M0 0 L8 0 L4.0 8 Z" fill="#f4f4f4"/></svg><div class="t" style="left:1100px;top:191px;font-size:12px;font-weight:bold;transform:scaleX(0.9530);color:#fff">Normal</div><div class="a" style="left:1214.5px;top:190.5px;width:105px;height:15px;background:linear-gradient(#2c2c2c,#222);border:1px solid #111;border-radius:3px;box-shadow:0 1px 0 rgba(255,255,255,.12)"></div><div class="t" style="left:1220.5px;top:191.2px;font-size:12px;transform:scaleX(0.8486);color:#f2f2f2">RGB Image</div><svg style="left:1307.5px;top:198.5px" width="7" height="4.5" viewBox="0 0 7 4.5"><path d="M0 0 L7 0 L3.5 4.5 Z" fill="#ddd"/></svg><div class="a" style="left:1324px;top:190.5px;width:14.5px;height:15px;background:linear-gradient(#2c2c2c,#1e1e1e);border:1px solid #111;border-radius:3px"></div><svg style="left:1326.5px;top:194.5px" width="10" height="7" viewBox="0 0 10 7"><path d="M0 3.500 Q5 -1.200 10 3.500 Q5 8.200 0 3.500 Z" fill="#fff"/><circle cx="4.600" cy="3.200" r="1.700" fill="#111"/><circle cx="4" cy="2.600" r=".6" fill="#bbb"/></svg><div class="a" style="left:1071px;top:213.5px;width:18px;height:17.5px;background:#161616;border:1px solid #0a0a0a;border-radius:2px"></div><div class="a" style="left:1092px;top:213.5px;width:18px;height:17.5px;background:#161616;border:1px solid #0a0a0a;border-radius:2px"></div><svg style="left:1073px;top:215px" width="14" height="14" viewBox="0 0 14 14"><rect x="1" y="1" width="12" height="3.500" fill="#eee"/><path d="M7 4.500 L2.500 9 L5.500 9 L5.500 13 L8.500 13 L8.500 9 L11.500 9 Z" fill="#50d050" stroke="#1a6a1a" stroke-width=".5"/></svg><svg style="left:1094px;top:215px" width="14" height="14" viewBox="0 0 14 14"><path d="M3.500 4.500 A4.800 4.800 0 1 0 7 2.500" fill="none" stroke="#50d050" stroke-width="2"/><path d="M7.500 0 L7.500 5.500 L3.500 2.700 Z" fill="#50d050"/></svg><div class="t" style="left:1118px;top:215px;font-size:12px;transform:scaleX(0.9069);color:#eee">crease in normal map.orbx::normal.jpg</div><div class="t" style="left:1118px;top:233px;font-size:12px;transform:scaleX(0.8694);color:#eee">1000x1000 pixels, 24 bpp RGB LDR, 3906 KB</div><div class="a" style="left:1073px;top:267px;width:266.5px;height:34.5px;background:#5a5a5a;border:1px solid #1e1e1e;border-radius:0 0 5px 5px"></div><div class="a" style="left:1071px;top:257px;width:268.5px;height:21px;background:linear-gradient(#6c6c6c,#5a5a5a);border:1px solid #1e1e1e;border-bottom:none;border-radius:5px 5px 0 0"></div><div class="a" style="left:1067px;top:257px;width:22.5px;height:21px;background:linear-gradient(135deg,#a8c6b6,#7d9a8a);border:1px solid #1c1c1c;border-radius:5px"></div><svg style="left:1094px;top:263px" width="8" height="8" viewBox="0 0 8 8"><path d="M0 0 L8 0 L4.0 8 Z" fill="#f4f4f4"/></svg><div class="t" style="left:1112px;top:260px;transform:scaleX(.875);">Power</div><div class="a" style="left:1210.5px;top:259.5px;width:105px;height:15px;background:linear-gradient(#2c2c2c,#222);border:1px solid #111;border-radius:3px;box-shadow:0 1px 0 rgba(255,255,255,.12)"></div><div class="t" style="left:1216.5px;top:260.2px;font-size:12px;transform:scaleX(0.8521);color:#f2f2f2">Greyscale Color</div><svg style="left:1303.5px;top:267.5px" width="7" height="4.5" viewBox="0 0 7 4.5"><path d="M0 0 L7 0 L3.5 4.5 Z" fill="#ddd"/></svg><div class="a" style="left:1320px;top:259.5px;width:14.5px;height:15px;background:linear-gradient(#2c2c2c,#1e1e1e);border:1px solid #111;border-radius:3px"></div><svg style="left:1322.5px;top:263.5px" width="10" height="7" viewBox="0 0 10 7"><path d="M0 3.500 Q5 -1.200 10 3.500 Q5 8.200 0 3.500 Z" fill="#fff"/><circle cx="4.600" cy="3.200" r="1.700" fill="#111"/><circle cx="4" cy="2.600" r=".6" fill="#bbb"/></svg><div class="a" style="left:1121px;top:282.5px;width:214.5px;height:15.5px;background:linear-gradient(#3a3a3a,#2c2c2c);border:1px solid #141414;border-radius:3px;overflow:hidden"><div class="a" style="left:0;top:0;width:214.5px;height:100%;background:linear-gradient(#242424,#161616)"></div></div><svg style="left:1127px;top:287.0px" width="5.5" height="6.5" viewBox="0 0 5.5 6.5"><path d="M5.5 0 L0 3.25 L5.5 6.5 Z" fill="#ddd"/></svg><svg style="left:1324.5px;top:287.0px" width="5.5" height="6.5" viewBox="0 0 5.5 6.5"><path d="M0 0 L5.5 3.25 L0 6.5 Z" fill="#ddd"/></svg><div class="tc" style="left:1121px;top:283.0px;width:214.5px;color:#f4f4f4">1.000</div><div class="a" style="left:1073px;top:316.5px;width:266.5px;height:34.5px;background:#5a5a5a;border:1px solid #1e1e1e;border-radius:0 0 5px 5px"></div><div class="a" style="left:1071px;top:306.5px;width:268.5px;height:21px;background:linear-gradient(#6c6c6c,#5a5a5a);border:1px solid #1e1e1e;border-bottom:none;border-radius:5px 5px 0 0"></div><div class="a" style="left:1067px;top:306.5px;width:22.5px;height:21px;background:linear-gradient(135deg,#8fa8c6,#64809e);border:1px solid #1c1c1c;border-radius:5px"></div><svg style="left:1094px;top:312.5px" width="8" height="8" viewBox="0 0 8 8"><path d="M0 0 L8 0 L4.0 8 Z" fill="#f4f4f4"/></svg><div class="t" style="left:1112px;top:309.5px;transform:scaleX(.875);">Gamma</div><div class="a" style="left:1210.5px;top:309px;width:105px;height:15px;background:linear-gradient(#2c2c2c,#222);border:1px solid #111;border-radius:3px;box-shadow:0 1px 0 rgba(255,255,255,.12)"></div><div class="t" style="left:1216.5px;top:309.7px;font-size:12px;transform:scaleX(0.8594);color:#f2f2f2">Float Value</div><svg style="left:1303.5px;top:317px" width="7" height="4.5" viewBox="0 0 7 4.5"><path d="M0 0 L7 0 L3.5 4.5 Z" fill="#ddd"/></svg><div class="a" style="left:1320px;top:309px;width:14.5px;height:15px;background:linear-gradient(#2c2c2c,#1e1e1e);border:1px solid #111;border-radius:3px"></div><svg style="left:1322.5px;top:311.5px" width="10" height="10" viewBox="0 0 10 10"><path d="M1 9 Q8 8 9 1" fill="none" stroke="#eee" stroke-width="1.300"/></svg><div class="a" style="left:1121px;top:332px;width:214.5px;height:15.5px;background:linear-gradient(#3a3a3a,#2c2c2c);border:1px solid #141414;border-radius:3px;overflow:hidden"><div class="a" style="left:0;top:0;width:143.7px;height:100%;background:linear-gradient(#242424,#161616)"></div></div><svg style="left:1127px;top:336.5px" width="5.5" height="6.5" viewBox="0 0 5.5 6.5"><path d="M5.5 0 L0 3.25 L5.5 6.5 Z" fill="#ddd"/></svg><svg style="left:1324.5px;top:336.5px" width="5.5" height="6.5" viewBox="0 0 5.5 6.5"><path d="M0 0 L5.5 3.25 L0 6.5 Z" fill="#ddd"/></svg><div class="tc" style="left:1121px;top:332.5px;width:214.5px;color:#f4f4f4">1.000</div><div class="a" style="left:1073px;top:366.5px;width:266.5px;height:34.5px;background:#5a5a5a;border:1px solid #1e1e1e;border-radius:0 0 5px 5px"></div><div class="a" style="left:1071px;top:356.5px;width:268.5px;height:21px;background:linear-gradient(#6c6c6c,#5a5a5a);border:1px solid #1e1e1e;border-bottom:none;border-radius:5px 5px 0 0"></div><div class="a" style="left:1067px;top:356.5px;width:22.5px;height:21px;background:linear-gradient(135deg,#c0a0b8,#967890);border:1px solid #1c1c1c;border-radius:5px"></div><svg style="left:1094px;top:362.5px" width="8" height="8" viewBox="0 0 8 8"><path d="M0 0 L8 0 L4.0 8 Z" fill="#f4f4f4"/></svg><div class="t" style="left:1112px;top:359.5px;transform:scaleX(.875);">Invert</div><div class="a" style="left:1230.5px;top:359px;width:105px;height:15px;background:linear-gradient(#2c2c2c,#222);border:1px solid #111;border-radius:3px;box-shadow:0 1px 0 rgba(255,255,255,.12)"></div><div class="t" style="left:1236.5px;top:359.7px;font-size:12px;transform:scaleX(0.8574);color:#f2f2f2">Bool Value</div><svg style="left:1323.5px;top:367px" width="7" height="4.5" viewBox="0 0 7 4.5"><path d="M0 0 L7 0 L3.5 4.5 Z" fill="#ddd"/></svg><div class="a" style="left:1121px;top:382px;width:15.5px;height:15.5px;background:linear-gradient(#333,#222);border:1px solid #111;border-radius:3px"></div><div class="t" style="left:1142px;top:383px;transform:scaleX(.875);">Enabled</div><div class="a" style="left:1073px;top:416.5px;width:266.5px;height:118.5px;background:#5a5a5a;border:1px solid #1e1e1e;border-radius:0 0 5px 5px"></div><div class="a" style="left:1071px;top:406.5px;width:268.5px;height:21px;background:linear-gradient(#6c6c6c,#5a5a5a);border:1px solid #1e1e1e;border-bottom:none;border-radius:5px 5px 0 0"></div><div class="a" style="left:1067px;top:406.5px;width:22.5px;height:21px;background:linear-gradient(135deg,#8fa8c6,#64809e);border:1px solid #1c1c1c;border-radius:5px"></div><svg style="left:1094px;top:412.5px" width="8" height="8" viewBox="0 0 8 8"><path d="M0 0 L8 0 L4.0 8 Z" fill="#f4f4f4"/></svg><div class="t" style="left:1112px;top:409.5px;font-size:12px;font-weight:bold;transform:scaleX(0.9445);color:#fff">UV transform</div><div class="a" style="left:1230.5px;top:409px;width:105px;height:15px;background:linear-gradient(#2c2c2c,#222);border:1px solid #111;border-radius:3px;box-shadow:0 1px 0 rgba(255,255,255,.12)"></div><div class="t" style="left:1236.5px;top:409.7px;font-size:12px;transform:scaleX(0.8409);color:#f2f2f2">3D Transformation</div><svg style="left:1323.5px;top:417px" width="7" height="4.5" viewBox="0 0 7 4.5"><path d="M0 0 L7 0 L3.5 4.5 Z" fill="#ddd"/></svg><div class="a" style="left:1082.5px;top:433px;width:253.0px;height:21px;background:linear-gradient(#787878,#666);border:1px solid #1e1e1e;border-radius:5px"></div><div class="a" style="left:1078.5px;top:433px;width:22px;height:21px;background:linear-gradient(#a8a8a8,#7a7a7a);border:1px solid #1c1c1c;border-radius:5px 0 0 5px"></div><svg style="left:1106px;top:439.5px" width="8" height="8" viewBox="0 0 8 8"><path d="M0 0 L8 4.0 L0 8 Z" fill="#f4f4f4"/></svg><div class="t" style="left:1124px;top:436px;transform:scaleX(.875);">Rotation Order</div><div class="a" style="left:1226.5px;top:436px;width:105px;height:15px;background:linear-gradient(#2c2c2c,#222);border:1px solid #111;border-radius:3px;box-shadow:0 1px 0 rgba(255,255,255,.12)"></div><div class="t" style="left:1232.5px;top:436.7px;font-size:12px;transform:scaleX(0.8638);color:#f2f2f2">Enum Value</div><svg style="left:1319.5px;top:444px" width="7" height="4.5" viewBox="0 0 7 4.5"><path d="M0 0 L7 0 L3.5 4.5 Z" fill="#ddd"/></svg><div class="a" style="left:1082.5px;top:459px;width:253.0px;height:21px;background:linear-gradient(#787878,#666);border:1px solid #1e1e1e;border-radius:5px"></div><div class="a" style="left:1078.5px;top:459px;width:22px;height:21px;background:linear-gradient(#8fa8c6,#64809e);border:1px solid #1c1c1c;border-radius:5px 0 0 5px"></div><svg style="left:1106px;top:465.5px" width="8" height="8" viewBox="0 0 8 8"><path d="M0 0 L8 4.0 L0 8 Z" fill="#f4f4f4"/></svg><div class="t" style="left:1124px;top:462px;transform:scaleX(.875);">Rotation</div><div class="a" style="left:1226.5px;top:462px;width:105px;height:15px;background:linear-gradient(#2c2c2c,#222);border:1px solid #111;border-radius:3px;box-shadow:0 1px 0 rgba(255,255,255,.12)"></div><div class="t" style="left:1232.5px;top:462.7px;font-size:12px;transform:scaleX(0.8594);color:#f2f2f2">Float Value</div><svg style="left:1319.5px;top:470px" width="7" height="4.5" viewBox="0 0 7 4.5"><path d="M0 0 L7 0 L3.5 4.5 Z" fill="#ddd"/></svg><div class="a" style="left:1082.5px;top:485px;width:253.0px;height:21px;background:linear-gradient(#787878,#666);border:1px solid #1e1e1e;border-radius:5px"></div><div class="a" style="left:1078.5px;top:485px;width:22px;height:21px;background:linear-gradient(#8fa8c6,#64809e);border:1px solid #1c1c1c;border-radius:5px 0 0 5px"></div><svg style="left:1106px;top:491.5px" width="8" height="8" viewBox="0 0 8 8"><path d="M0 0 L8 4.0 L0 8 Z" fill="#f4f4f4"/></svg><div class="t" style="left:1124px;top:488px;transform:scaleX(.875);">Scale</div><div class="a" style="left:1206.5px;top:488px;width:105px;height:15px;background:linear-gradient(#2c2c2c,#222);border:1px solid #111;border-radius:3px;box-shadow:0 1px 0 rgba(255,255,255,.12)"></div><div class="t" style="left:1212.5px;top:488.7px;font-size:12px;transform:scaleX(0.8594);color:#f2f2f2">Float Value</div><svg style="left:1299.5px;top:496px" width="7" height="4.5" viewBox="0 0 7 4.5"><path d="M0 0 L7 0 L3.5 4.5 Z" fill="#ddd"/></svg><div class="a" style="left:1316px;top:488px;width:14.5px;height:15px;background:linear-gradient(#2c2c2c,#1e1e1e);border:1px solid #111;border-radius:3px"></div><svg style="left:1318.5px;top:490.5px" width="10" height="10" viewBox="0 0 10 10"><path d="M1 9 Q8 8 9 1" fill="none" stroke="#eee" stroke-width="1.300"/></svg><div class="a" style="left:1082.5px;top:511px;width:253.0px;height:21px;background:linear-gradient(#787878,#666);border:1px solid #1e1e1e;border-radius:5px"></div><div class="a" style="left:1078.5px;top:511px;width:22px;height:21px;background:linear-gradient(#8fa8c6,#64809e);border:1px solid #1c1c1c;border-radius:5px 0 0 5px"></div><svg style="left:1106px;top:517.5px" width="8" height="8" viewBox="0 0 8 8"><path d="M0 0 L8 4.0 L0 8 Z" fill="#f4f4f4"/></svg><div class="t" style="left:1124px;top:514px;transform:scaleX(.875);">Translation</div><div class="a" style="left:1226.5px;top:514px;width:105px;height:15px;background:linear-gradient(#2c2c2c,#222);border:1px solid #111;border-radius:3px;box-shadow:0 1px 0 rgba(255,255,255,.12)"></div><div class="t" style="left:1232.5px;top:514.7px;font-size:12px;transform:scaleX(0.8594);color:#f2f2f2">Float Value</div><svg style="left:1319.5px;top:522px" width="7" height="4.5" viewBox="0 0 7 4.5"><path d="M0 0 L7 0 L3.5 4.5 Z" fill="#ddd"/></svg><div class="a" style="left:1071px;top:540.5px;width:268.5px;height:21px;background:linear-gradient(#6c6c6c,#5a5a5a);border:1px solid #1e1e1e;border-radius:5px"></div><div class="a" style="left:1067px;top:540.5px;width:22.5px;height:21px;background:linear-gradient(135deg,#b8b8b8,#909090);border:1px solid #1c1c1c;border-radius:5px"></div><svg style="left:1094px;top:546.5px" width="8" height="8" viewBox="0 0 8 8"><path d="M0 0 L8 0 L4.0 8 Z" fill="#f4f4f4"/></svg><div class="t" style="left:1112px;top:543.5px;transform:scaleX(.875);">Projection</div><div class="a" style="left:1230.5px;top:543px;width:105px;height:15px;background:linear-gradient(#2c2c2c,#222);border:1px solid #111;border-radius:3px;box-shadow:0 1px 0 rgba(255,255,255,.12)"></div><div class="t" style="left:1236.5px;top:543.7px;font-size:12px;transform:scaleX(0.8308);color:#f2f2f2">Mesh UV</div><svg style="left:1323.5px;top:551px" width="7" height="4.5" viewBox="0 0 7 4.5"><path d="M0 0 L7 0 L3.5 4.5 Z" fill="#ddd"/></svg><div class="a" style="left:1073px;top:576.5px;width:266.5px;height:34.0px;background:#5a5a5a;border:1px solid #1e1e1e;border-radius:0 0 5px 5px"></div><div class="a" style="left:1071px;top:566.5px;width:268.5px;height:21px;background:linear-gradient(#6c6c6c,#5a5a5a);border:1px solid #1e1e1e;border-bottom:none;border-radius:5px 5px 0 0"></div><div class="a" style="left:1067px;top:566.5px;width:22.5px;height:21px;background:linear-gradient(135deg,#a8a8a8,#7a7a7a);border:1px solid #1c1c1c;border-radius:5px"></div><svg style="left:1094px;top:572.5px" width="8" height="8" viewBox="0 0 8 8"><path d="M0 0 L8 0 L4.0 8 Z" fill="#f4f4f4"/></svg><div class="t" style="left:1112px;top:569.5px;transform:scaleX(.875);">Border mode</div><div class="a" style="left:1230.5px;top:569px;width:105px;height:15px;background:linear-gradient(#2c2c2c,#222);border:1px solid #111;border-radius:3px;box-shadow:0 1px 0 rgba(255,255,255,.12)"></div><div class="t" style="left:1236.5px;top:569.7px;font-size:12px;transform:scaleX(0.8638);color:#f2f2f2">Enum Value</div><svg style="left:1323.5px;top:577px" width="7" height="4.5" viewBox="0 0 7 4.5"><path d="M0 0 L7 0 L3.5 4.5 Z" fill="#ddd"/></svg><div class="a" style="left:1121px;top:592.5px;width:214.5px;height:15px;background:linear-gradient(#2c2c2c,#222);border:1px solid #111;border-radius:3px;box-shadow:0 1px 0 rgba(255,255,255,.12)"></div><div class="t" style="left:1127px;top:593.2px;font-size:12px;transform:scaleX(0.8823);color:#f2f2f2">Wrap Around</div><svg style="left:1323.5px;top:600.5px" width="7" height="4.5" viewBox="0 0 7 4.5"><path d="M0 0 L7 0 L3.5 4.5 Z" fill="#ddd"/></svg><div class="a" style="left:1059px;top:621px;width:284.5px;height:21px;background:linear-gradient(#525252,#444);border:1px solid #1e1e1e;border-radius:5px"></div><div class="a" style="left:1055px;top:621px;width:22px;height:21px;background:linear-gradient(#b8b8b8,#909090);border:1px solid #1c1c1c;border-radius:5px 0 0 5px"></div><div class="t" style="left:1100px;top:624px;transform:scaleX(.875);">Displacement</div><div class="a" style="left:1234.5px;top:623.5px;width:105px;height:15px;background:linear-gradient(#2c2c2c,#222);border:1px solid #111;border-radius:3px;box-shadow:0 1px 0 rgba(255,255,255,.12)"></div><div class="t" style="left:1240.5px;top:624.2px;font-size:12px;transform:scaleX(0.8597);color:#8a8a8a">No node</div><svg style="left:1327.5px;top:631.5px" width="7" height="4.5" viewBox="0 0 7 4.5"><path d="M0 0 L7 0 L3.5 4.5 Z" fill="#ddd"/></svg><div class="a" style="left:1061px;top:657px;width:282.5px;height:34px;background:#484848;border:1px solid #1e1e1e;border-radius:0 0 5px 5px"></div><div class="a" style="left:1059px;top:647px;width:284.5px;height:21px;background:linear-gradient(#5c5c5c,#484848);border:1px solid #1e1e1e;border-bottom:none;border-radius:5px 5px 0 0"></div><div class="a" style="left:1055px;top:647px;width:22.5px;height:21px;background:linear-gradient(135deg,#a8c6b6,#7d9a8a);border:1px solid #1c1c1c;border-radius:5px"></div><svg style="left:1082px;top:653px" width="8" height="8" viewBox="0 0 8 8"><path d="M0 0 L8 0 L4.0 8 Z" fill="#f4f4f4"/></svg><div class="t" style="left:1100px;top:650px;transform:scaleX(.875);">Opacity</div><div class="a" style="left:1214.5px;top:649.5px;width:105px;height:15px;background:linear-gradient(#2c2c2c,#222);border:1px solid #111;border-radius:3px;box-shadow:0 1px 0 rgba(255,255,255,.12)"></div><div class="t" style="left:1220.5px;top:650.2px;font-size:12px;transform:scaleX(0.8521);color:#f2f2f2">Greyscale Color</div><svg style="left:1307.5px;top:657.5px" width="7" height="4.5" viewBox="0 0 7 4.5"><path d="M0 0 L7 0 L3.5 4.5 Z" fill="#ddd"/></svg><div class="a" style="left:1324px;top:649.5px;width:14.5px;height:15px;background:linear-gradient(#2c2c2c,#1e1e1e);border:1px solid #111;border-radius:3px"></div><svg style="left:1326.5px;top:653.5px" width="10" height="7" viewBox="0 0 10 7"><path d="M0 3.500 Q5 -1.200 10 3.500 Q5 8.200 0 3.500 Z" fill="#fff"/><circle cx="4.600" cy="3.200" r="1.700" fill="#111"/><circle cx="4" cy="2.600" r=".6" fill="#bbb"/></svg><div class="a" style="left:1109px;top:672.5px;width:230px;height:15.5px;background:linear-gradient(#3a3a3a,#2c2c2c);border:1px solid #141414;border-radius:3px;overflow:hidden"><div class="a" style="left:0;top:0;width:230.0px;height:100%;background:linear-gradient(#242424,#161616)"></div></div><svg style="left:1115px;top:677.0px" width="5.5" height="6.5" viewBox="0 0 5.5 6.5"><path d="M5.5 0 L0 3.25 L5.5 6.5 Z" fill="#ddd"/></svg><svg style="left:1328px;top:677.0px" width="5.5" height="6.5" viewBox="0 0 5.5 6.5"><path d="M0 0 L5.5 3.25 L0 6.5 Z" fill="#ddd"/></svg><div class="tc" style="left:1109px;top:673.0px;width:230px;color:#f4f4f4">1.000</div><div class="a" style="left:1061px;top:706.5px;width:282.5px;height:33.5px;background:#484848;border:1px solid #1e1e1e;border-radius:0 0 5px 5px"></div><div class="a" style="left:1059px;top:696.5px;width:284.5px;height:21px;background:linear-gradient(#5c5c5c,#484848);border:1px solid #1e1e1e;border-bottom:none;border-radius:5px 5px 0 0"></div><div class="a" style="left:1055px;top:696.5px;width:22.5px;height:21px;background:linear-gradient(135deg,#c0a0b8,#967890);border:1px solid #1c1c1c;border-radius:5px"></div><svg style="left:1082px;top:702.5px" width="8" height="8" viewBox="0 0 8 8"><path d="M0 0 L8 0 L4.0 8 Z" fill="#f4f4f4"/></svg><div class="t" style="left:1100px;top:699.5px;transform:scaleX(.875);">Smooth</div><div class="a" style="left:1234.5px;top:699px;width:105px;height:15px;background:linear-gradient(#2c2c2c,#222);border:1px solid #111;border-radius:3px;box-shadow:0 1px 0 rgba(255,255,255,.12)"></div><div class="t" style="left:1240.5px;top:699.7px;font-size:12px;transform:scaleX(0.8574);color:#f2f2f2">Bool Value</div><svg style="left:1327.5px;top:707px" width="7" height="4.5" viewBox="0 0 7 4.5"><path d="M0 0 L7 0 L3.5 4.5 Z" fill="#ddd"/></svg></div>
<div class="a" style="left:0;top:0;width:1366px;height:707px;overflow:hidden"><svg style="left:1059px;top:77.5px" width="14" height="14" viewBox="0 0 14 14"><path d="M4 1 L13 1 L13 13 L1 13 L1 4 Z" fill="#fff" stroke="#333" stroke-width=".6"/><defs><linearGradient id="rgbg" x1="0" y1="0" x2="0" y2="1"><stop offset="0" stop-color="#30a0f0"/><stop offset=".35" stop-color="#40d060"/><stop offset=".65" stop-color="#f0e040"/><stop offset="1" stop-color="#f04030"/></linearGradient></defs><path d="M5 3 L12 3 L12 12 L2 12 L2 6 Z" fill="url(#rgbg)"/><path d="M1 4 L4 4 L4 1 Z" fill="#ddd"/></svg></div>
<div class="a" style="left:0;top:0;width:1366px;height:707px;overflow:hidden"><svg style="left:1059px;top:191.5px" width="14" height="14" viewBox="0 0 14 14"><path d="M4 1 L13 1 L13 13 L1 13 L1 4 Z" fill="#fff" stroke="#333" stroke-width=".6"/><circle cx="8" cy="5" r="1.800" fill="#d03018"/><circle cx="4.500" cy="8.500" r="1.800" fill="#d03018"/><circle cx="9.500" cy="10" r="2" fill="#d03018"/></svg></div>
<div class="a" style="left:0;top:0;width:1366px;height:707px;overflow:hidden"><svg style="left:1071px;top:260.5px" width="14" height="14" viewBox="0 0 14 14"><path d="M4 1 L13 1 L13 13 L1 13 L1 4 Z" fill="#fff" stroke="#333" stroke-width=".6"/><defs><linearGradient id="gyg" x1="0" y1="0" x2="0" y2="1"><stop offset="0" stop-color="#000"/><stop offset="1" stop-color="#eee"/></linearGradient></defs><path d="M5 3 L12 3 L12 12 L2 12 L2 6 Z" fill="url(#gyg)"/></svg></div>
<div class="a" style="left:0;top:0;width:1366px;height:707px;overflow:hidden"><svg style="left:1071px;top:310px" width="14" height="14" viewBox="0 0 14 14"><rect x=".5" y=".5" width="13" height="13" rx="2" fill="#2c3440" stroke="#cfd8e4" stroke-width="1"/><path d="M2.500 10.500 L5.500 10.500 L8.500 4.500 L11.500 4.500" fill="none" stroke="#a8c4f0" stroke-width="1.400"/></svg></div>
<div class="a" style="left:0;top:0;width:1366px;height:707px;overflow:hidden"><svg style="left:1071px;top:360px" width="14" height="14" viewBox="0 0 14 14"><rect x=".5" y=".5" width="13" height="13" rx="2" fill="#3a2a38" stroke="#e0c8dc" stroke-width="1"/><path d="M2 7 L5.500 7 M8.500 7 L12 7 M5.500 4 L5.500 10 M8.500 4 L8.500 10" stroke="#f080d8" stroke-width="1.300"/></svg></div>
<div class="a" style="left:0;top:0;width:1366px;height:707px;overflow:hidden"><svg style="left:1071px;top:410px" width="14" height="14" viewBox="0 0 14 14"><rect x="-1" y="-1" width="16" height="16" rx="3" fill="none"/><path d="M1 1 L13 13 M13 1 L1 13" stroke="#f4f4f4" stroke-width="1.400"/><path d="M0 0 L4 0 L0 4 Z M14 0 L10 0 L14 4 Z M0 14 L4 14 L0 10 Z M14 14 L10 14 L14 10 Z" fill="#f4f4f4"/><path d="M7 7 L7 1 M7 7 L1 9" stroke="#b0c8e8" stroke-width="1"/></svg></div>
<div class="a" style="left:0;top:0;width:1366px;height:707px;overflow:hidden"><svg style="left:1082.5px;top:436.5px" width="14" height="14" viewBox="0 0 14 14"><rect x=".5" y=".5" width="13" height="13" rx="2" fill="#3a3a3a" stroke="#ddd" stroke-width="1"/><rect x="2.500" y="6" width="9" height="2" fill="#f0d850"/></svg></div>
<div class="a" style="left:0;top:0;width:1366px;height:707px;overflow:hidden"><svg style="left:1082.5px;top:462.5px" width="14" height="14" viewBox="0 0 14 14"><rect x=".5" y=".5" width="13" height="13" rx="2" fill="#2c3440" stroke="#cfd8e4" stroke-width="1"/><path d="M2.500 10.500 L5.500 10.500 L8.500 4.500 L11.500 4.500" fill="none" stroke="#a8c4f0" stroke-width="1.400"/></svg></div>
<div class="a" style="left:0;top:0;width:1366px;height:707px;overflow:hidden"><svg style="left:1082.5px;top:488.5px" width="14" height="14" viewBox="0 0 14 14"><rect x=".5" y=".5" width="13" height="13" rx="2" fill="#2c3440" stroke="#cfd8e4" stroke-width="1"/><path d="M2.500 10.500 L5.500 10.500 L8.500 4.500 L11.500 4.500" fill="none" stroke="#a8c4f0" stroke-width="1.400"/></svg></div>
<div class="a" style="left:0;top:0;width:1366px;height:707px;overflow:hidden"><svg style="left:1082.5px;top:514.5px" width="14" height="14" viewBox="0 0 14 14"><rect x=".5" y=".5" width="13" height="13" rx="2" fill="#2c3440" stroke="#cfd8e4" stroke-width="1"/><path d="M2.500 10.500 L5.500 10.500 L8.500 4.500 L11.500 4.500" fill="none" stroke="#a8c4f0" stroke-width="1.400"/></svg></div>
<div class="a" style="left:0;top:0;width:1366px;height:707px;overflow:hidden"><svg style="left:1071px;top:570px" width="14" height="14" viewBox="0 0 14 14"><rect x=".5" y=".5" width="13" height="13" rx="2" fill="#3a3a3a" stroke="#ddd" stroke-width="1"/><rect x="2.500" y="6" width="9" height="2" fill="#f0d850"/></svg></div>
<div class="a" style="left:0;top:0;width:1366px;height:707px;overflow:hidden"><svg style="left:1059px;top:650.5px" width="14" height="14" viewBox="0 0 14 14"><path d="M4 1 L13 1 L13 13 L1 13 L1 4 Z" fill="#fff" stroke="#333" stroke-width=".6"/><defs><linearGradient id="gyg" x1="0" y1="0" x2="0" y2="1"><stop offset="0" stop-color="#000"/><stop offset="1" stop-color="#eee"/></linearGradient></defs><path d="M5 3 L12 3 L12 12 L2 12 L2 6 Z" fill="url(#gyg)"/></svg></div>
<div class="a" style="left:0;top:0;width:1366px;height:707px;overflow:hidden"><svg style="left:1059px;top:700px" width="14" height="14" viewBox="0 0 14 14"><rect x=".5" y=".5" width="13" height="13" rx="2" fill="#3a2a38" stroke="#e0c8dc" stroke-width="1"/><path d="M2 7 L5.500 7 M8.500 7 L12 7 M5.500 4 L5.500 10 M8.500 4 L8.500 10" stroke="#f080d8" stroke-width="1.300"/></svg></div>
<div class="a" style="left:1347.5px;top:47px;width:19px;height:660px;background:#262626"></div>
<svg style="left:1350px;top:52px" width="12" height="9" viewBox="0 0 12 9"><path d="M0 9 L6 0 L12 9 Z" fill="#fff"/></svg>
<svg style="left:1350px;top:693px" width="12" height="9" viewBox="0 0 12 9"><path d="M0 0 L6 9 L12 0 Z" fill="#fff"/></svg>
<div class="a" style="left:1349.5px;top:67px;width:13px;height:467px;background:#6c6c6c"></div>
<div class="a" style="left:1353.5px;top:534px;width:5px;height:154px;background:#4c4c4c"></div>
<div class="a" style="left:1352px;top:296px;width:9px;height:1px;background:#888"></div>
<div class="a" style="left:1352px;top:300px;width:9px;height:1px;background:#888"></div>
<div class="a" style="left:1352px;top:304px;width:9px;height:1px;background:#888"></div>
<div class="a" style="left:1017px;top:74px;width:18px;height:1px;background:#4a4a4a"></div>
<div class="a" style="left:1017px;top:128px;width:18px;height:1px;background:#4a4a4a"></div>
<div class="a" style="left:1017px;top:157px;width:18px;height:1px;background:#4a4a4a"></div>
<div class="a" style="left:1017px;top:342px;width:18px;height:1px;background:#4a4a4a"></div>
<svg style="left:1017.0px;top:52.0px;opacity:1" width="16" height="16" viewBox="0 0 20 20"><rect x="1" y="1" width="15" height="15" fill="#f0f0f0"/><circle cx="9" cy="9.500" r="5.500" fill="#222" stroke="#888" stroke-width="1"/><path d="M9 5 L9 9" stroke="#ddd" stroke-width="1.200"/><g fill="#222"><rect x="2" y="2" width="1.500" height="1.500"/><rect x="5" y="2" width="1.500" height="1.500"/><rect x="2" y="5" width="1.500" height="1.500"/></g><path d="M14 16 L20 16 L17 20 Z" fill="#ddd"/></svg>
<svg style="left:1017.0px;top:79.0px;opacity:1" width="16" height="16" viewBox="0 0 20 20"><rect x="1" y="2" width="11" height="9" fill="#e8e8e8" stroke="#fff" stroke-width="1"/><rect x="1.500" y="2.500" width="10" height="2" fill="#222"/><rect x="6" y="9" width="12" height="9" fill="#d8d8d8" stroke="#fff" stroke-width="1"/><rect x="6.500" y="9.500" width="11" height="2" fill="#222"/></svg>
<svg style="left:1017.0px;top:101.0px;opacity:1" width="16" height="16" viewBox="0 0 20 20"><rect x="2" y="6" width="11" height="3" fill="none" stroke="#fff" stroke-width="1.300"/><rect x="6" y="11" width="11" height="3" fill="none" stroke="#fff" stroke-width="1.300"/></svg>
<svg style="left:1017.0px;top:134.0px;opacity:1" width="16" height="16" viewBox="0 0 20 20"><rect x="1" y="1" width="18" height="17" fill="#cfe4f4" stroke="#e8e8e8" stroke-width="1"/><rect x="1.500" y="9" width="17" height="8" fill="#8a9a6a"/><path d="M1.500 9.500 L6 8.500 L9 6 L12 8.500 L16.500 9.500 L16.500 11 L1.500 11 Z" fill="#111"/><circle cx="6" cy="5" r="1.500" fill="#fff8c0"/></svg>
<svg style="left:1017.0px;top:163.0px;opacity:1" width="16" height="16" viewBox="0 0 20 20"><rect x="1" y="6" width="18" height="12" rx="1.500" fill="#3a3a3a" stroke="#999" stroke-width=".8"/><rect x="6" y="3" width="7" height="3.500" fill="#555" stroke="#999" stroke-width=".5"/><circle cx="12" cy="12.500" r="4.500" fill="#222" stroke="#bbb" stroke-width="1"/><circle cx="12" cy="12.500" r="2.200" fill="#c02020"/><rect x="2.500" y="8" width="3.500" height="8" fill="#ddd"/></svg>
<svg style="left:1017.0px;top:188.0px;opacity:1" width="16" height="16" viewBox="0 0 20 20"><rect x="2" y="3" width="16" height="11" fill="none" stroke="#eee" stroke-width="1.300"/><path d="M5 8.500 L15 8.500 M5 6.500 L5 10.500 M15 6.500 L15 10.500" stroke="#eee" stroke-width="1"/><rect x="8" y="14" width="4" height="2" fill="#eee"/><rect x="5" y="16" width="10" height="1.500" fill="#eee"/></svg>
<svg style="left:1017.0px;top:214.0px;opacity:1" width="16" height="16" viewBox="0 0 20 20"><path d="M1 4 Q10 9 19 4 L19 15 Q10 20 1 15 Z" fill="#b8d4ea" stroke="#e8f0f8" stroke-width=".8"/><path d="M1 11 Q10 16 19 11 L19 15 Q10 20 1 15 Z" fill="#5f8a3a"/><path d="M1 4 Q10 0 19 4 Q10 9 1 4 Z" fill="#3f6a94"/></svg>
<svg style="left:1017.0px;top:240.0px;opacity:1" width="16" height="16" viewBox="0 0 20 20"><rect x="1" y="1" width="18" height="18" rx="1.500" fill="#f4f4f4" stroke="#222" stroke-width="1"/><path d="M2.500 16 L2.500 14 L6 10 L7.500 11 L10 5 L11 4 L12.500 9 L14 8 L16 13 L17.500 16 Z" fill="#000"/></svg>
<svg style="left:1017.0px;top:266.0px;opacity:1" width="16" height="16" viewBox="0 0 20 20"><rect x="1" y="1" width="18" height="18" rx="4" fill="#0a0a0a" stroke="#ccc" stroke-width="1.200"/><path d="M10 2.500 L11.500 7.500 L16 4 L12.700 8.500 L17.500 10 L12.700 11.500 L16 16 L11.500 12.700 L10 17.500 L8.500 12.700 L4 16 L7.300 11.500 L2.500 10 L7.300 8.500 L4 4 L8.500 7.500 Z" fill="#f4ffe0"/></svg>
<svg style="left:1017.0px;top:292.0px;opacity:1" width="16" height="16" viewBox="0 0 20 20"><rect x="1" y="1" width="18" height="18" rx="1.500" fill="#1a1a1a" stroke="#ccc" stroke-width="1.200"/><path d="M4 5 L9 5 L7.500 11 L4 16 M9 5 L12.500 9 M11 4 L16 7.500 L15 15 M7.500 11 L11 15" stroke="#eee" stroke-width="1.500" fill="none"/></svg>
<svg style="left:1017.0px;top:319.0px;opacity:1" width="16" height="16" viewBox="0 0 20 20"><path d="M7.500 2 L2 16 Q7.500 19 13 16 Z" fill="url(#gc)"/><circle cx="14" cy="14.500" r="5" fill="url(#go)"/></svg>
<svg style="left:1017.0px;top:660.0px;opacity:1" width="16" height="16" viewBox="0 0 20 20"><circle cx="4.200" cy="15.800" r="2.600" fill="none" stroke="#f0f0f0" stroke-width="1.600"/><path d="M6 14 L12 8" stroke="#f0f0f0" stroke-width="2.600"/><path d="M17 2.200 L14 5.200 L14.800 6.800 L16.800 6.800 L18.800 4.800 A4.500 4.500 0 1 1 14.500 1.200 Z" fill="#f0f0f0"/></svg>
<svg style="left:1018px;top:688px" width="14" height="14" viewBox="0 0 16 16"><g stroke="#f4f4f4" stroke-width="1.4" fill="#f4f4f4"><path d="M1 1 L5.5 5.5 M15 1 L10.5 5.5 M1 15 L5.5 10.5 M15 15 L10.5 10.5"/><path d="M.5 .5 L4.5 .5 L.5 4.5 Z M15.500 .5 L11.5 .5 L15.5 4.5 Z M.5 15.5 L4.5 15.5 L.5 11.5 Z M15.5 15.5 L11.5 15.5 L15.5 11.5 Z" stroke="none"/></g></svg>
<div class="a" style="left:1015px;top:708px;width:1px;height:20px;background:#6a6a6a"></div>
<div class="t" style="left:1027px;top:711px;font-size:12px;transform:scaleX(0.8519);color:#eee">OctaneLive account:</div>
<div class="t" style="left:1131px;top:711px;font-size:12px;transform:scaleX(0.8766);color:#18e018">activated</div>
<div class="t" style="left:1201px;top:711px;font-size:12px;transform:scaleX(0.8713);color:#eee">status:</div>
<div class="t" style="left:1243px;top:711px;font-size:12px;transform:scaleX(0.8722);color:#18e018">connected</div>
<div class="t" style="left:1323px;top:711px;font-size:12px;transform:scaleX(0.8996);color:#eee">act:</div>
<svg style="left:1347px;top:710px" width="16" height="16" viewBox="0 0 16 16"><path d="M3 2 L3 13 L14 13 M3 13 L12 4" stroke="#f07020" stroke-width="1" stroke-dasharray="1.500 1" fill="none"/><circle cx="3" cy="2.500" r="2" fill="#eee"/><circle cx="3" cy="13" r="2.400" fill="#eee"/><circle cx="13.500" cy="13" r="2" fill="#eee"/><circle cx="12" cy="4" r="1.600" fill="#eee"/></svg>
<div class="a" style="left:0px;top:728px;width:1366px;height:40px;background:#6b9092"></div>
<div class="a" style="left:52px;top:729px;width:58px;height:40px;background:#87a3a3;border:1px solid #a3baba;border-bottom:none"></div>
<div class="a" style="left:52px;top:729px;width:53.5px;height:40px;background:#87a3a3;border:1px solid #a3baba;border-bottom:none"></div>
<div class="a" style="left:114px;top:729px;width:58px;height:40px;background:#87a3a3;border:1px solid #a3baba;border-bottom:none"></div>
<div class="a" style="left:176px;top:729px;width:58px;height:40px;background:#87a3a3;border:1px solid #a3baba;border-bottom:none"></div>
<div class="a" style="left:176px;top:729px;width:53.5px;height:40px;background:#87a3a3;border:1px solid #a3baba;border-bottom:none"></div>
<div class="a" style="left:238px;top:729px;width:58px;height:40px;background:#87a3a3;border:1px solid #a3baba;border-bottom:none"></div>
<div class="a" style="left:300px;top:729px;width:58px;height:40px;background:#87a3a3;border:1px solid #a3baba;border-bottom:none"></div>
<div class="a" style="left:300px;top:729px;width:53.5px;height:40px;background:#87a3a3;border:1px solid #a3baba;border-bottom:none"></div>
<div class="a" style="left:362px;top:729px;width:58px;height:40px;background:#87a3a3;border:1px solid #a3baba;border-bottom:none"></div>
<div class="a" style="left:424px;top:729px;width:58px;height:40px;background:#87a3a3;border:1px solid #a3baba;border-bottom:none"></div>
<div class="a" style="left:486px;top:729px;width:58px;height:40px;background:#87a3a3;border:1px solid #a3baba;border-bottom:none"></div>
<div class="a" style="left:548px;top:729px;width:58px;height:40px;background:#87a3a3;border:1px solid #a3baba;border-bottom:none"></div>
<div class="a" style="left:610px;top:729px;width:58px;height:40px;background:#87a3a3;border:1px solid #a3baba;border-bottom:none"></div>
<div class="a" style="left:672px;top:729px;width:58px;height:40px;background:#b4c6c6;border:1px solid #e4ecec;border-bottom:none"></div>
<svg style="left:12px;top:734px" width="27" height="27" viewBox="0 0 27 27"><path d="M0 4 L11 2.300 L11 12.800 L0 12.800 Z M12.500 2 L27 0 L27 12.800 L12.500 12.800 Z M0 14.200 L11 14.200 L11 24.700 L0 23 Z M12.500 14.200 L27 14.200 L27 27 L12.500 25 Z" fill="#fff"/></svg>
<svg style="left:62.0px;top:732.0px" width="32" height="32" viewBox="0 0 32 32"><path d="M3 7 L12 7 L14 9 L27 9 L27 27 L3 27 Z" fill="#e8c860"/><path d="M5 5 L14 5 L16 7 L29 7 L29 25 L5 25 Z" fill="#f8e08c" stroke="#c8a040" stroke-width=".6"/><rect x="6" y="6" width="3" height="2" fill="#30b040"/><rect x="11" y="6" width="3" height="2" fill="#d03030"/><rect x="19" y="8" width="3" height="2" fill="#3080e0"/><path d="M6 20 L26 20 L26 30 L21 30 L21 25 L11 25 L11 30 L6 30 Z" fill="#58b8f0" stroke="#d8f0ff" stroke-width="1"/></svg>
<svg style="left:126.0px;top:732.0px" width="32" height="32" viewBox="0 0 32 32"><path d="M6 14 Q7 6 13 9 Q20 10 25 3 Q27 12 24 18 Q20 25 12 23 Q6 21 6 14 Z" fill="#7a7468" stroke="#3a3630" stroke-width=".8"/><ellipse cx="6.500" cy="17" rx="4.500" ry="3.500" fill="#111"/><circle cx="13" cy="14" r="2.600" fill="#fff"/><circle cx="18.500" cy="13" r="2.600" fill="#fff"/><circle cx="13.300" cy="14.300" r="1.200" fill="#000"/><circle cx="18.800" cy="13.300" r="1.200" fill="#000"/><path d="M17 21 L27 27" stroke="#c89040" stroke-width="1.600"/><path d="M26 26 L29 29" stroke="#444" stroke-width="2.400"/></svg>
<svg style="left:188.0px;top:732.0px" width="32" height="32" viewBox="0 0 32 32"><defs><radialGradient id="ffb" cx="45%" cy="35%" r="60%"><stop offset="0" stop-color="#70c0f8"/><stop offset="1" stop-color="#1848a8"/></radialGradient><linearGradient id="ffo" x1="0" y1="0" x2="0" y2="1"><stop offset="0" stop-color="#f8d020"/><stop offset=".5" stop-color="#f08010"/><stop offset="1" stop-color="#d83808"/></linearGradient></defs><circle cx="16" cy="15" r="12" fill="url(#ffb)"/><path d="M3.500 13 Q3 6 9 4 Q7 7 9 9 Q12 9 13 11 L10 14 Q10 19 15 20 Q21 21 24 16 Q25 12 23 8 Q28 11 28.500 17 Q28 27 17 29 Q5 29 3.500 17 Z" fill="url(#ffo)"/></svg>
<svg style="left:250.0px;top:732.0px" width="32" height="32" viewBox="0 0 32 32"><circle cx="16" cy="16" r="11.500" fill="#10a8e8"/><circle cx="9.500" cy="8.500" r="6.500" fill="#10a8e8"/><circle cx="22.500" cy="23.500" r="6.500" fill="#10a8e8"/><text x="16" y="23" text-anchor="middle" font-family="Liberation Sans,sans-serif" font-weight="bold" font-size="20" fill="#fff">S</text></svg>
<svg style="left:310.0px;top:732.0px" width="32" height="32" viewBox="0 0 32 32"><defs><linearGradient id="inf" x1="0" y1="0" x2="1" y2="0"><stop offset="0" stop-color="#2878e0"/><stop offset=".6" stop-color="#6048c8"/><stop offset="1" stop-color="#8838b8"/></linearGradient></defs><path d="M16 16 C12 10 4 10 4 16 C4 22 12 22 16 16 C20 10 28 10 28 16 C28 22 20 22 16 16 Z" fill="none" stroke="url(#inf)" stroke-width="4"/></svg>
<svg style="left:374.0px;top:733.0px" width="32" height="32" viewBox="0 0 32 32"><rect x="5" y="3" width="20" height="14" fill="#f8f8f8" stroke="#888" stroke-width=".6"/><rect x="5" y="14" width="20" height="15" fill="#58c828" stroke="#2a7a10" stroke-width=".8"/><text x="7" y="26" font-family="Liberation Sans,sans-serif" font-weight="bold" font-size="11" fill="#000">N++</text><path d="M28 2 L18 22 L17 26 L20 23 L30 4 Z" fill="#f0a020" stroke="#805010" stroke-width=".5"/><path d="M28 2 L30 4 L31 2 Z" fill="#e05050"/></svg>
<svg style="left:436.0px;top:732.0px" width="32" height="32" viewBox="0 0 32 32"><path d="M8 6 L25 4 L26 26 L11 30 Z" fill="#90d0e8" stroke="#5090a8" stroke-width=".6"/><path d="M8 6 L25 4 L25.300 10 L8.800 13 Z" fill="#c8ecf8"/><path d="M25 4 L28 6 L29 26 L26 26 Z" fill="#d8b880"/><path d="M9 5 L24 3" stroke="#666" stroke-width="1.600" stroke-dasharray="1 1.200"/></svg>
<svg style="left:498.0px;top:732.0px" width="32" height="32" viewBox="0 0 32 32"><defs><radialGradient id="bsp" cx="35%" cy="30%" r="70%"><stop offset="0" stop-color="#60b8f8"/><stop offset="1" stop-color="#0848a8"/></radialGradient></defs><circle cx="15" cy="15" r="11" fill="url(#bsp)"/><path d="M4 20 Q8 29 18 26 Q25 23 27 16 L30 18 L29 8 L20 12 L23.500 14 Q21 20 15 22 Q8 24 4 20 Z" fill="#fff" stroke="#2060b0" stroke-width=".5"/></svg>
<svg style="left:560.0px;top:732.0px" width="32" height="32" viewBox="0 0 32 32"><path d="M6 5 L25 3 L27 28 L7 27 Z" fill="#1078e0"/><path d="M25 3 L28 6 L29 29 L27 28 Z" fill="#0850a8"/><circle cx="16" cy="16" r="8" fill="#fff"/><path d="M9.500 16 L13.500 12.500 L13.500 14.800 L18.500 14.800 L18.500 12.500 L22.500 16 L18.500 19.500 L18.500 17.200 L13.500 17.200 L13.500 19.500 Z" fill="#1078e0"/></svg>
<svg style="left:622.0px;top:732.0px" width="32" height="32" viewBox="0 0 32 32"><circle cx="16" cy="16" r="13" fill="#1a2c30" stroke="#3a5c60" stroke-width="1.500"/><path d="M9 22 Q10 10 14 10 Q17 10 17 16 Q17 22 20 22 Q23 22 23 10" fill="none" stroke="#28a8b8" stroke-width="3"/></svg>
<svg style="left:684px;top:732px" width="32" height="32" viewBox="0 0 32 32"><defs><linearGradient id="olg2" gradientUnits="userSpaceOnUse" x1="0" y1="3" x2="0" y2="29"><stop offset="0" stop-color="#d8d8d8"/><stop offset=".5" stop-color="#2a2a2a"/><stop offset=".62" stop-color="#000"/><stop offset="1" stop-color="#000"/></linearGradient></defs><path d="M9.36 15.42 Q9.04 8.27 15.32 3.02 Q16.24 9.24 16.60 11.74 Z M13.18 9.96 Q19.21 6.11 26.90 8.92 Q21.97 12.83 19.99 14.39 Z M19.82 10.54 Q26.17 13.84 27.58 21.90 Q21.73 19.58 19.39 18.65 Z M22.64 16.58 Q22.96 23.73 16.68 28.98 Q15.76 22.76 15.40 20.26 Z M18.82 22.04 Q12.79 25.89 5.10 23.08 Q10.03 19.17 12.01 17.61 Z M12.18 21.46 Q5.83 18.16 4.42 10.10 Q10.27 12.42 12.61 13.35 Z " fill="url(#olg2)"/><circle cx="16" cy="16" r="4.94" fill="none" stroke="url(#olg2)" stroke-width="3.22"/></svg>
<div class="t" style="left:1098px;top:740px;font-size:14px;transform:scaleX(0.8236);color:#fff;line-height:16px">Desktop</div>
<div class="t" style="left:1149px;top:731px;font-size:13px;color:#fff;transform:none">»</div>
<svg style="left:1168px;top:746px" width="9" height="5" viewBox="0 0 9 5"><path d="M0 5 L4.500 0 L9 5 Z" fill="#fff"/></svg>
<svg style="left:1189px;top:740px" width="18" height="17" viewBox="0 0 18 17"><g fill="#2890e8" stroke="#fff" stroke-width=".7"><path d="M4.500 1 L9 3.800 L4.500 6.600 L0 3.800 Z"/><path d="M13.500 1 L18 3.800 L13.500 6.600 L9 3.800 Z"/><path d="M4.500 6.600 L9 9.400 L4.500 12.200 L0 9.400 Z"/><path d="M13.500 6.600 L18 9.400 L13.500 12.200 L9 9.400 Z"/><path d="M4.500 12.800 L9 10 L13.500 12.800 L9 15.600 Z"/></g><circle cx="13.500" cy="13" r="3.600" fill="#28a828" stroke="#fff" stroke-width=".6"/><path d="M11.800 13 L13 14.300 L15.300 11.800" stroke="#fff" stroke-width="1" fill="none"/></svg>
<svg style="left:1213px;top:742px" width="16" height="13" viewBox="0 0 16 13"><g fill="#fff"><rect x="0" y="10" width="2" height="3"/><rect x="3.500" y="8" width="2" height="5"/><rect x="7" y="5.500" width="2" height="7.500"/><rect x="10.500" y="3" width="2" height="10"/><rect x="14" y="0" width="2" height="13"/></g></svg>
<svg style="left:1237px;top:740px" width="16" height="17" viewBox="0 0 16 17"><path d="M2 1 L2 4 M5 1 L5 4 M0.500 4 L6.500 4 L6.500 8 Q3.500 10 0.500 8 Z M3.500 9 L3.500 16" stroke="#fff" stroke-width="1.200" fill="#fff"/><rect x="8.500" y="3" width="6.500" height="13" fill="none" stroke="#fff" stroke-width="1.300"/><rect x="10.500" y="1.500" width="2.500" height="1.500" fill="#fff"/><rect x="10" y="9" width="3.500" height="5.500" fill="#fff"/></svg>
<svg style="left:1264px;top:741px" width="10" height="15" viewBox="0 0 10 15"><path d="M0 5 L3 5 L8 0 L8 15 L3 10 L0 10 Z" fill="#fff"/></svg>
<div class="t" style="left:1299.5px;top:733px;font-size:13.5px;transform:scaleX(0.8474);color:#fff;line-height:15px">2:55 PM</div>
<div class="t" style="left:1292px;top:749.5px;font-size:13.5px;transform:scaleX(0.8525);color:#fff;line-height:15px">16/06/2014</div>
</body></html>
